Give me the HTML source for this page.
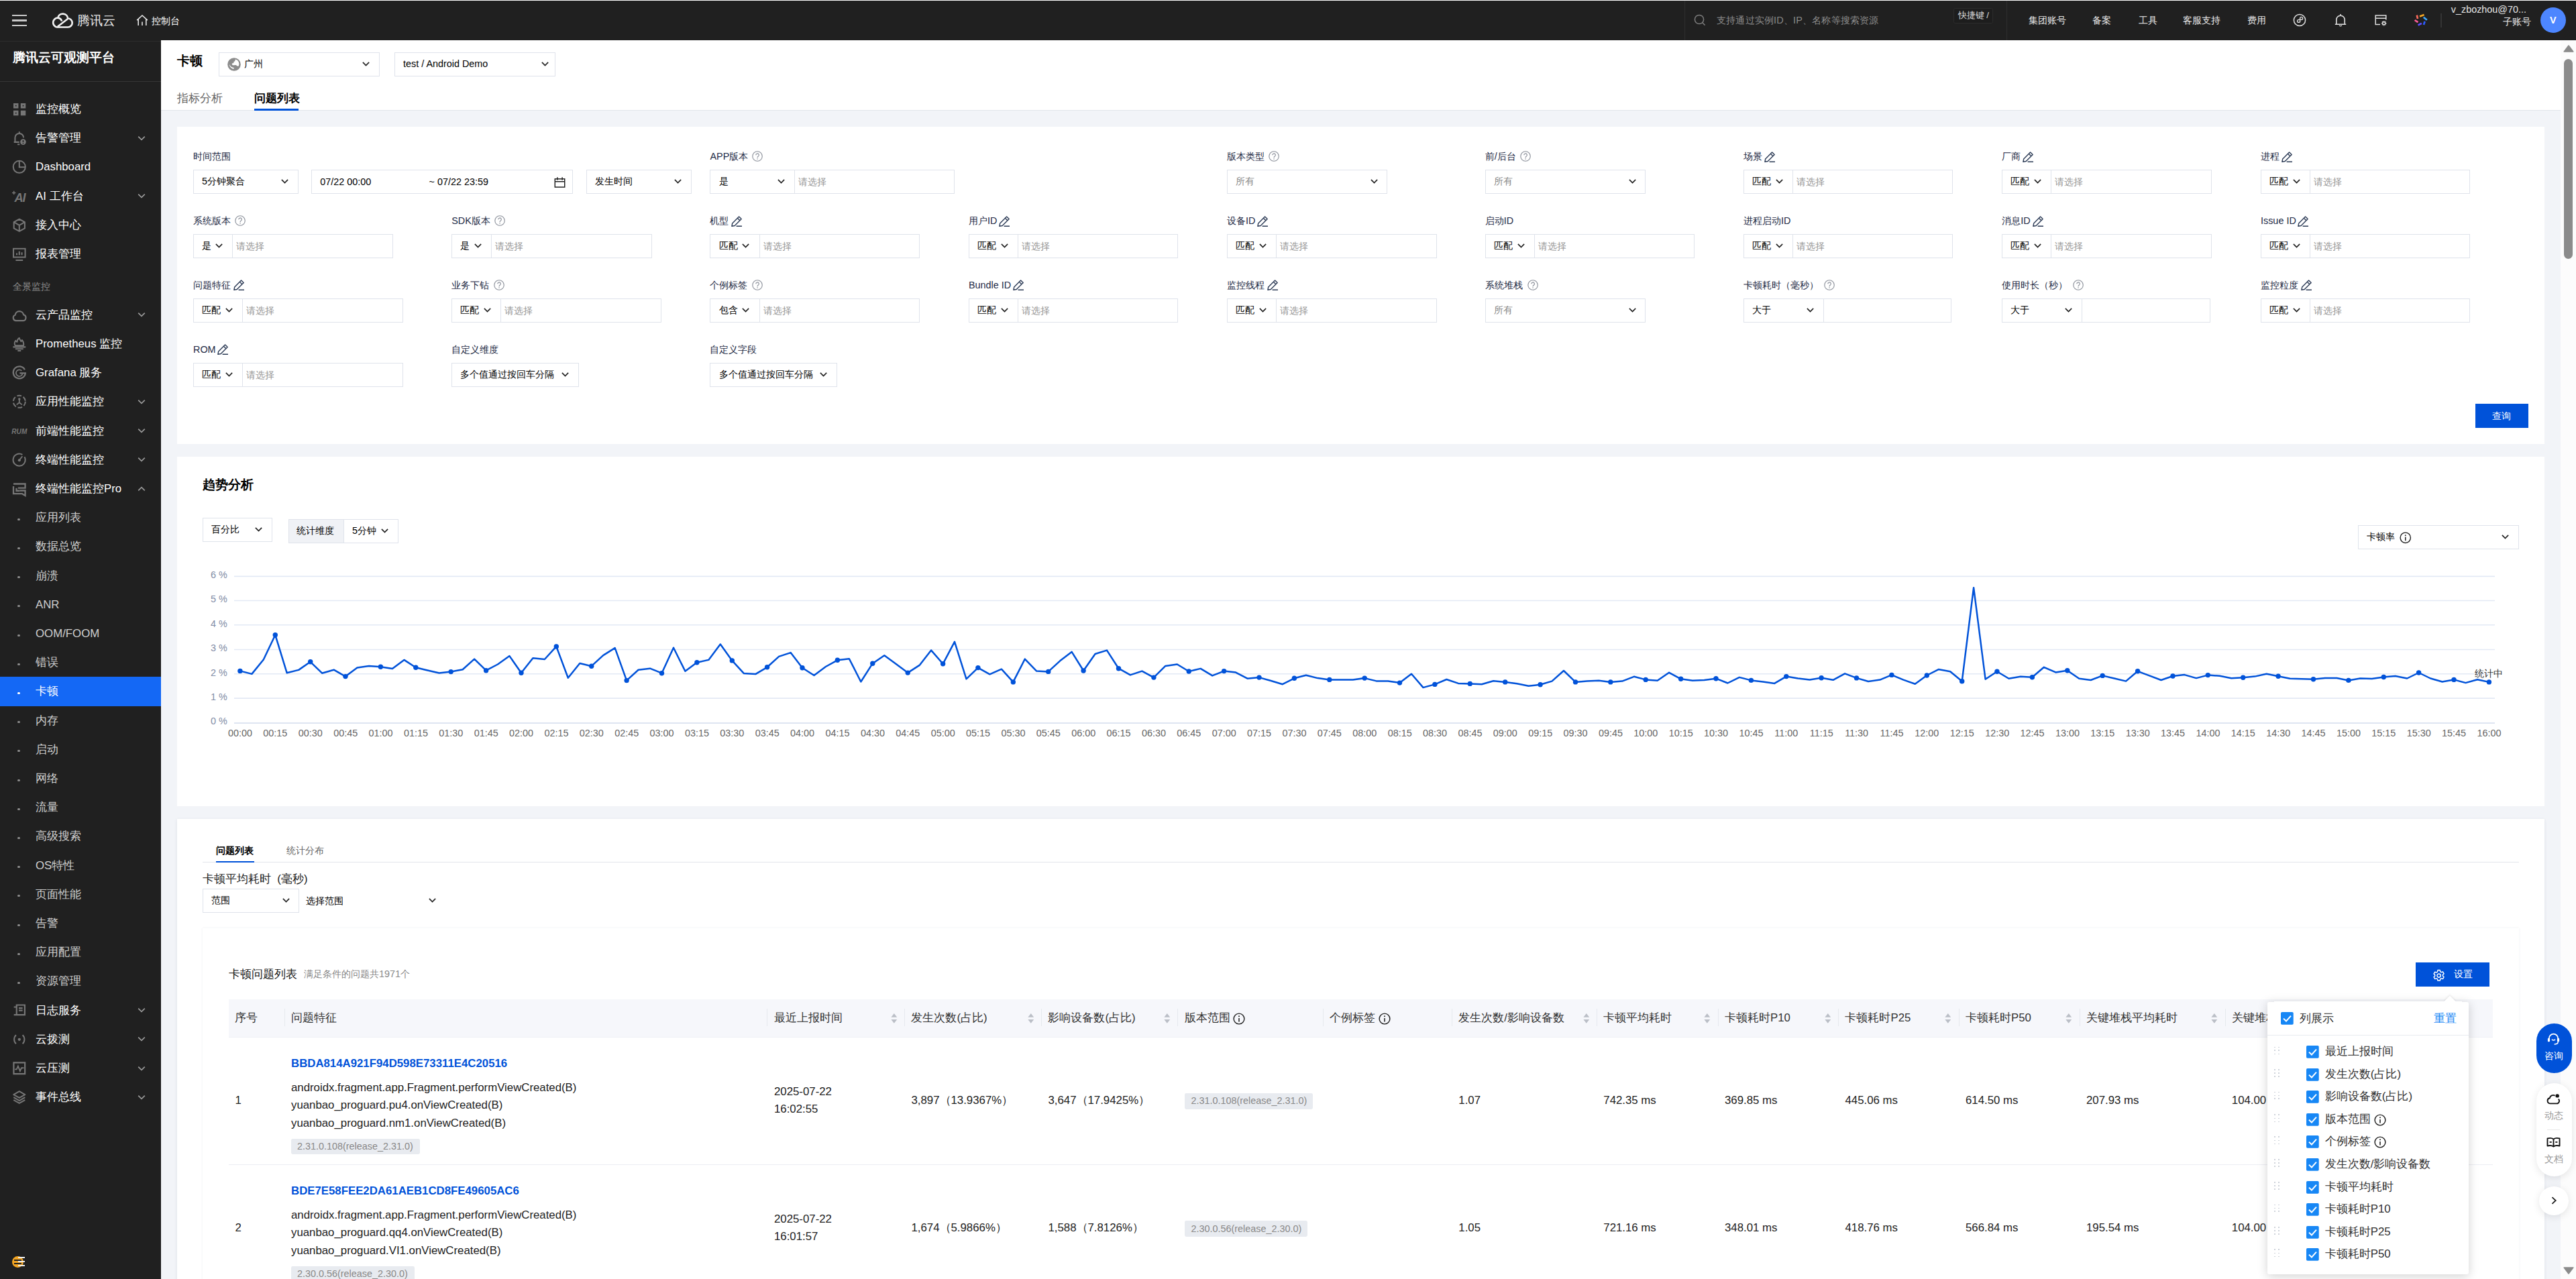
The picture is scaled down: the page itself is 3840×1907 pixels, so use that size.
<!DOCTYPE html><html><head><meta charset="utf-8"><title>卡顿</title><style>html,body{margin:0;padding:0;width:3840px;height:1907px;overflow:hidden;background:#f2f4f8}
#root{zoom:1.2;position:absolute;left:0;top:0;width:3200px;height:1589.2px;overflow:hidden;font-family:"Liberation Sans",sans-serif;font-size:12px;line-height:18px;color:#000;background:#f2f4f8}
#topline{position:absolute;left:0;top:0;width:3200px;height:0.84px;background:#fff;z-index:5}
#root *{box-sizing:border-box}
.abs{position:absolute}
svg{display:block;overflow:visible}
/* topbar */
#top{position:absolute;left:0;top:0;width:3200px;height:50.42px;background:#202020;color:#e4e4e4}
#top .t{position:absolute;white-space:nowrap;line-height:18px;height:18px;font-size:12px}
/* sidebar */
#side{position:absolute;left:0;top:51.07px;width:199.8px;height:1540px;background:#202020}
#side .title{position:absolute;left:16px;top:9.6px;font-size:16px;font-weight:bold;color:#fff;line-height:22px;white-space:nowrap}
#side .line{position:absolute;left:0;top:49.6px;width:200px;height:1px;background:#363636}
.mi{position:absolute;left:0;width:199.8px;height:36px;color:#fff;font-size:14px;line-height:36px;white-space:nowrap}
.mi .tx{position:absolute;left:44.2px;top:0}
.mi .ic{position:absolute;left:15.2px;top:9px;width:18px;height:18px}
.mi .ar{position:absolute;left:171px;top:13px;width:10px;height:10px}
.mi.sub{color:#cfcfcf}
.mi.sub .dot{position:absolute;left:22px;top:18.8px;width:2.6px;height:2.6px;border-radius:50%;background:#8c8c8c}
.mi.act{background:#1468f5;color:#fff}
.mi.act .dot{background:#fff}
.grp{position:absolute;left:16px;font-size:12px;color:#8a8a8a;line-height:18px}
/* header */
#hd{position:absolute;left:199.8px;top:50.4px;width:2980.2px;height:86px;background:#fff;border-bottom:1px solid #e3e6ec}
.sel{position:absolute;height:29.6px;border:1px solid #dcdee3;background:#fff;font-size:12px;line-height:27.6px;white-space:nowrap;color:#000}
.sel .v{position:absolute;left:10px;top:0}
.sel .ph{color:#888}
.sel .cv{position:absolute;right:10px;top:10.6px;width:9px;height:6px}
.lab{position:absolute;font-size:12px;line-height:18px;color:#1d2a45;white-space:nowrap;height:18px}
.card{position:absolute;background:#fff}
.ph{color:#999}
</style></head><body><div id="root"><div id="topline"></div>
<div id="top">
<div class="abs" style="left:15.0px;top:18.25px;width:18.333px;height:1.833px;background:#c9c9c9"></div>
<div class="abs" style="left:15.0px;top:24.5px;width:18.333px;height:1.833px;background:#c9c9c9"></div>
<div class="abs" style="left:15.0px;top:30.75px;width:18.333px;height:1.833px;background:#c9c9c9"></div>
<svg class="abs" style="left:63.333px;top:15.0px" width="28.333" height="21.667" viewBox="0 0 34 26"><path d="M9.0 22.5 H25.3 A6.5 6.5 0 0 0 25.2 9.5 A7.6 7.6 0 0 0 10.2 8.6 A7 7 0 0 0 9 22.5 z" fill="none" stroke="#efefef" stroke-width="2.7" stroke-linejoin="round"/><path d="M10.2 8.6 A7 7 0 0 1 16.2 13.6 M9.8 21.8 L24.8 10.2" stroke="#efefef" stroke-width="2.6" fill="none"/></svg>
<div class="t" style="left:95.417px;top:14.832999999999998px;font-size:15.6px;line-height:22px;height:22px;color:#e8e8e8">腾讯云</div>
<svg class="abs" style="left:168.75px;top:17.917px" width="15.0" height="14.167" viewBox="0 0 18 17"><path d="M1.2 8.2 L9 1 L16.8 8.2 M3.2 6.6 V16 M14.8 6.6 V16 M9 10.5 V16" fill="none" stroke="#e6e6e6" stroke-width="1.6"/></svg>
<div class="t" style="left:187.917px;top:17.333px;color:#fff">控制台</div>
<div class="abs" style="left:2092.5px;top:0;width:1px;height:50.4px;background:#2e2e2e"></div>
<svg class="abs" style="left:2104.583px;top:17.5px" width="15.0" height="15.0" viewBox="0 0 18 18"><circle cx="8" cy="8" r="6.6" fill="none" stroke="#7c7c7c" stroke-width="1.5"/><path d="M12.8 12.8 L16.6 16.6" stroke="#7c7c7c" stroke-width="1.5"/></svg>
<div class="t" style="left:2132.5px;top:17.083px;color:#8a8a8a;letter-spacing:0.15px">支持通过实例ID、IP、名称等搜索资源</div>
<div class="abs" style="left:2427.083px;top:10.0px;width:48.75px;height:19.583px;border:1px solid #2c2c2c;border-radius:2px;background:#1d1d1d;color:#dcdcdc;font-size:11px;line-height:15.967000000000002px;text-align:center;white-space:nowrap">快捷键 /</div>
<div class="abs" style="left:2492.5px;top:0;width:1px;height:50.4px;background:#2e2e2e"></div>
<div class="t" style="left:2519.833px;top:17.083px;color:#e6e6e6">集团账号</div>
<div class="t" style="left:2599.5px;top:17.083px;color:#e6e6e6">备案</div>
<div class="t" style="left:2656.25px;top:17.083px;color:#e6e6e6">工具</div>
<div class="t" style="left:2711.667px;top:17.083px;color:#e6e6e6">客服支持</div>
<div class="t" style="left:2791.667px;top:17.083px;color:#e6e6e6">费用</div>
<svg class="abs" style="left:2848.583px;top:16.583px" width="16.667" height="16.667" viewBox="0 0 20 20"><circle cx="10" cy="10" r="8.6" fill="none" stroke="#e0e0e0" stroke-width="1.5"/><path d="M10.6 13.2 V7.4 a2 2 0 1 1 2 2 H8.6 a2 2 0 1 0 2 2" fill="none" stroke="#e0e0e0" stroke-width="1.4"/></svg>
<svg class="abs" style="left:2898.75px;top:16.583px" width="16.667" height="16.667" viewBox="0 0 20 20"><path d="M1.800 16.200h16.400M3.800 16.200V9.400a6.200 6.200 0 0 1 12.400 0V16.200M10 1v2.200" fill="none" stroke="#e0e0e0" stroke-width="1.600"/><path d="M8.200 17.600a1.900 1.900 0 0 0 3.600 0" fill="none" stroke="#e0e0e0" stroke-width="1.400"/></svg>
<svg class="abs" style="left:2948.833px;top:16.583px" width="16.667" height="16.667" viewBox="0 0 20 20"><path d="M9 16.5 H2.2 V3 H17.8 V9.5 M2.2 7.2 H17.8" fill="none" stroke="#e0e0e0" stroke-width="1.5"/><circle cx="14.7" cy="14.7" r="2" fill="none" stroke="#e0e0e0" stroke-width="1.4"/><path d="M14.7 10.9 v1.6 M14.7 16.9 v1.6 M10.9 14.7 h1.6 M16.9 14.7 h1.6 M12 12 l1.1 1.1 M16.3 16.3 l1.1 1.1 M12 17.4 l1.1 -1.1 M16.3 13.1 l1.1 -1.1" stroke="#e0e0e0" stroke-width="1.2"/></svg>
<svg class="abs" style="left:2999.0px;top:16.583px" width="16.667" height="16.667" viewBox="0 0 20 20"><g fill="none" stroke-width="2.700"><path d="M8 4.500L14.600 1.900" stroke="#f5a623"/><path d="M13.800 5.800L18.800 9.800" stroke="#3fa9ff"/><path d="M15.600 11.800L14 17" stroke="#2b5cff"/><path d="M5.600 17.600L10.800 14.800" stroke="#5b4dff"/><path d="M0.600 10L5.400 13.200" stroke="#ff5e9a"/><path d="M3.800 2.600L5 8" stroke="#ff6b5e"/></g></svg>
<div class="abs" style="left:3032.083px;top:16.667px;width:1px;height:17.5px;background:#343434"></div>
<div class="t" style="left:3000.0px;width:138.333px;top:3.167px;text-align:right;color:#e6e6e6;font-size:12px">v_zbozhou@70...</div>
<div class="t" style="left:3000.0px;width:143.75px;top:18.667px;text-align:right;color:#e6e6e6;font-size:12px">子账号</div>
<div class="abs" style="left:3155.667px;top:9.333px;width:31.667px;height:31.667px;border-radius:50%;background:#4d86ff;color:#fff;font-weight:bold;font-size:12px;line-height:31.667px;text-align:center">V</div>
</div>
<div id="side"><div class="abs" style="left:0;top:-0.6px;width:199.8px;height:1.2px;background:#2d2d2d"></div><div class="title">腾讯云可观测平台</div><div class="line"></div>
<div class="mi" style="top:66.2px"><svg class="ic" viewBox="0 0 16 16"><path d="M1.5 1.5h5.5v5.5h-5.5zM9.5 1.5h5.5v5.5h-5.5zM1.5 9.5h5.5v5.5h-5.5zM9.5 9.5h5.5v5.5h-5.5z" fill="#767676"/><path d="M3.6 3.6h1.3v1.3h-1.3zM11.6 3.6h1.3v1.3h-1.3zM3.6 11.6h1.3v1.3h-1.3z" fill="#202020"/></svg><span class="tx">监控概览</span></div>
<div class="mi" style="top:102.32px"><svg class="ic" viewBox="0 0 16 16"><path d="M2 12.5h6M3.3 12.5V7.6a4.7 4.7 0 0 1 9.4 0M8 1v1.6M6 15h2.4" fill="none" stroke="#767676" stroke-width="1.5"/><circle cx="12.2" cy="12.3" r="3.2" fill="#767676"/><path d="M12.2 10.4v2.2M12.2 13.4v.9" stroke="#202020" stroke-width="1.1"/></svg><span class="tx">告警管理</span><svg class="ar" viewBox="0 0 10 10"><path d="M1 3L5 7L9 3" fill="none" stroke="#9a9a9a" stroke-width="1.4"/></svg></div>
<div class="mi" style="top:138.44px"><svg class="ic" viewBox="0 0 16 16"><circle cx="8" cy="8" r="6.7" fill="none" stroke="#767676" stroke-width="1.5"/><path d="M8 1.5V8.4H14.5" fill="none" stroke="#767676" stroke-width="1.5"/></svg><span class="tx">Dashboard</span></div>
<div class="mi" style="top:174.56px"><svg class="ic" viewBox="0 0 16 16"><text x="2.600" y="14" font-family="Liberation Sans" font-style="italic" font-weight="bold" font-size="13.500" fill="#767676" letter-spacing="-0.800">AI</text><path d="M2 2v4M0 4h4" stroke="#767676" stroke-width="1.100"/></svg><span class="tx">AI 工作台</span><svg class="ar" viewBox="0 0 10 10"><path d="M1 3L5 7L9 3" fill="none" stroke="#9a9a9a" stroke-width="1.4"/></svg></div>
<div class="mi" style="top:210.68px"><svg class="ic" viewBox="0 0 16 16"><path d="M8 1.3l6 3.3v6.8l-6 3.3l-6-3.3V4.6zM2.3 4.8L8 8l5.7-3.2M8 8v6.5" fill="none" stroke="#767676" stroke-width="1.5" stroke-linejoin="round"/></svg><span class="tx">接入中心</span></div>
<div class="mi" style="top:246.8px"><svg class="ic" viewBox="0 0 16 16"><path d="M1.5 2h13v9.5h-13zM4 14.8h8M5.2 9V7M8 9V5M10.8 9V6.2" fill="none" stroke="#767676" stroke-width="1.5"/></svg><span class="tx">报表管理</span></div>
<div class="grp" style="top:296.20000000000005px">全景监控</div>
<div class="mi" style="top:322.1px"><svg class="ic" viewBox="0 0 16 16"><path d="M4.4 14.2H11.8a3.3 3.3 0 0 0 .9-6.5a4.7 4.7 0 0 0-9.3 .3a3.2 3.2 0 0 0 1 6.2z" fill="none" stroke="#767676" stroke-width="1.6" stroke-linejoin="round"/></svg><span class="tx">云产品监控</span><svg class="ar" viewBox="0 0 10 10"><path d="M1 3L5 7L9 3" fill="none" stroke="#9a9a9a" stroke-width="1.4"/></svg></div>
<div class="mi" style="top:358.1px"><svg class="ic" viewBox="0 0 16 16"><path d="M3.400 9.800c-1.300-2.200-.600-4 .500-5.600c.5 1.200 1.100 1.600 1.800 1.500c-.2-1.900 .8-3.300 2.300-4.300c.2 1.700 1.300 2.500 1.900 3.900c.6-.3 .9-.9 1-1.700c1.600 1.700 2.300 3.800 1.700 6.200z" fill="none" stroke="#767676" stroke-width="1.400" stroke-linejoin="round"/><path d="M1 11.400h14M3.600 13.600h8.800M6.200 15.600h3.600" stroke="#767676" stroke-width="1.500"/></svg><span class="tx">Prometheus 监控</span></div>
<div class="mi" style="top:394.1px"><svg class="ic" viewBox="0 0 16 16"><path d="M14 4.6A6.7 6.7 0 1 0 14.7 8.4H8.4" fill="none" stroke="#767676" stroke-width="1.7"/><path d="M11.6 8.4a3.6 3.6 0 1 1-1-2.6" fill="none" stroke="#767676" stroke-width="1.3"/></svg><span class="tx">Grafana 服务</span></div>
<div class="mi" style="top:430.1px"><svg class="ic" viewBox="0 0 16 16"><circle cx="8" cy="8" r="6.7" fill="none" stroke="#767676" stroke-width="1.5" stroke-dasharray="5 2.2"/><circle cx="8" cy="5.2" r="1.3" fill="#767676"/><path d="M8 6v3M8 9l-3 2.4M8 9l3 2.4" stroke="#767676" stroke-width="1.4" fill="none"/></svg><span class="tx">应用性能监控</span><svg class="ar" viewBox="0 0 10 10"><path d="M1 3L5 7L9 3" fill="none" stroke="#9a9a9a" stroke-width="1.4"/></svg></div>
<div class="mi" style="top:466.1px"><svg class="ic" viewBox="0 0 16 16"><text x="-0.5" y="11.800" font-family="Liberation Sans" font-style="italic" font-weight="bold" font-size="8.6" fill="#767676" textLength="17" lengthAdjust="spacingAndGlyphs">RUM</text></svg><span class="tx">前端性能监控</span><svg class="ar" viewBox="0 0 10 10"><path d="M1 3L5 7L9 3" fill="none" stroke="#9a9a9a" stroke-width="1.4"/></svg></div>
<div class="mi" style="top:502.1px"><svg class="ic" viewBox="0 0 16 16"><path d="M13.7 4.6A6.7 6.7 0 1 1 11.4 2.2" fill="none" stroke="#767676" stroke-width="1.5"/><circle cx="8" cy="8.3" r="1.5" fill="#767676"/><path d="M8 8.3l3.4-4.4" stroke="#767676" stroke-width="1.4"/></svg><span class="tx">终端性能监控</span><svg class="ar" viewBox="0 0 10 10"><path d="M1 3L5 7L9 3" fill="none" stroke="#9a9a9a" stroke-width="1.4"/></svg></div>
<div class="mi" style="top:538.1px"><svg class="ic" viewBox="0 0 16 16"><path d="M1.500 2.600h13v4.600h-8M1.500 5.200v8.300h9.600l3.400 2v-5.500h-6" fill="none" stroke="#767676" stroke-width="1.700"/><path d="M4.800 7.200v3h3.700" fill="none" stroke="#767676" stroke-width="1.700"/></svg><span class="tx">终端性能监控Pro</span><svg class="ar" viewBox="0 0 10 10"><path d="M1 7L5 3L9 7" fill="none" stroke="#9a9a9a" stroke-width="1.4"/></svg></div>
<div class="mi sub" style="top:574.1px"><span class="dot"></span><span class="tx">应用列表</span></div>
<div class="mi sub" style="top:610.1px"><span class="dot"></span><span class="tx">数据总览</span></div>
<div class="mi sub" style="top:646.1px"><span class="dot"></span><span class="tx">崩溃</span></div>
<div class="mi sub" style="top:682.1px"><span class="dot"></span><span class="tx">ANR</span></div>
<div class="mi sub" style="top:718.1px"><span class="dot"></span><span class="tx">OOM/FOOM</span></div>
<div class="mi sub" style="top:754.1px"><span class="dot"></span><span class="tx">错误</span></div>
<div class="mi sub act" style="top:790.1px"><span class="dot"></span><span class="tx">卡顿</span></div>
<div class="mi sub" style="top:826.1px"><span class="dot"></span><span class="tx">内存</span></div>
<div class="mi sub" style="top:862.1px"><span class="dot"></span><span class="tx">启动</span></div>
<div class="mi sub" style="top:898.1px"><span class="dot"></span><span class="tx">网络</span></div>
<div class="mi sub" style="top:934.1px"><span class="dot"></span><span class="tx">流量</span></div>
<div class="mi sub" style="top:970.1px"><span class="dot"></span><span class="tx">高级搜索</span></div>
<div class="mi sub" style="top:1006.1px"><span class="dot"></span><span class="tx">OS特性</span></div>
<div class="mi sub" style="top:1042.1px"><span class="dot"></span><span class="tx">页面性能</span></div>
<div class="mi sub" style="top:1078.1px"><span class="dot"></span><span class="tx">告警</span></div>
<div class="mi sub" style="top:1114.1px"><span class="dot"></span><span class="tx">应用配置</span></div>
<div class="mi sub" style="top:1150.1px"><span class="dot"></span><span class="tx">资源管理</span></div>
<div class="mi" style="top:1186.1px"><svg class="ic" viewBox="0 0 16 16"><path d="M5 2.600h9v10.800h-9zM2 4.800h3v8.600h-3M7.400 6h4.200M7.400 8.600h4.200" fill="none" stroke="#767676" stroke-width="1.600"/></svg><span class="tx">日志服务</span><svg class="ar" viewBox="0 0 10 10"><path d="M1 3L5 7L9 3" fill="none" stroke="#9a9a9a" stroke-width="1.4"/></svg></div>
<div class="mi" style="top:1222.1px"><svg class="ic" viewBox="0 0 16 16"><circle cx="8" cy="8" r="1.6" fill="#767676"/><path d="M4.4 3.2a6.6 6.6 0 0 0 0 9.6M11.6 3.2a6.6 6.6 0 0 1 0 9.6" fill="none" stroke="#767676" stroke-width="1.5"/></svg><span class="tx">云拨测</span><svg class="ar" viewBox="0 0 10 10"><path d="M1 3L5 7L9 3" fill="none" stroke="#9a9a9a" stroke-width="1.4"/></svg></div>
<div class="mi" style="top:1258.1px"><svg class="ic" viewBox="0 0 16 16"><path d="M1.8 1.8h12.4v12.4h-12.4z" fill="none" stroke="#767676" stroke-width="1.6"/><path d="M3 9.2h2l1.6-3.6l2.2 5.4l1.6-3.4h2.6" fill="none" stroke="#767676" stroke-width="1.4"/></svg><span class="tx">云压测</span><svg class="ar" viewBox="0 0 10 10"><path d="M1 3L5 7L9 3" fill="none" stroke="#9a9a9a" stroke-width="1.4"/></svg></div>
<div class="mi" style="top:1294.1px"><svg class="ic" viewBox="0 0 16 16"><path d="M8 1.6l6.3 3.6L8 8.8L1.7 5.2zM1.7 8.3L8 11.9l6.3-3.6M1.7 11.2L8 14.8l6.3-3.6" fill="none" stroke="#767676" stroke-width="1.5" stroke-linejoin="round"/></svg><span class="tx">事件总线</span><svg class="ar" viewBox="0 0 10 10"><path d="M1 3L5 7L9 3" fill="none" stroke="#9a9a9a" stroke-width="1.4"/></svg></div>
<div class="abs" style="left:15.0px;top:1509.6px;width:14.167px;height:14.167px;border-radius:50%;background:#f5a623"></div>
<div class="abs" style="left:22.5px;top:1510.85px;width:8.333px;height:1.3px;background:#eee;box-shadow:0 5.0px 0 #eee,0 10.0px 0 #eee"></div>
<div class="abs" style="left:17.5px;top:1514.183px;width:9.167px;height:1.6px;background:#202020;box-shadow:0 4.167px 0 #202020"></div>
</div>
<div class="abs" style="left:199.75px;top:50.333px;width:2981.083px;height:86.833px;background:#fff;border-bottom:1px solid #e2e5ea"></div>
<div class="abs" style="left:220.0px;top:63.83px;font-size:16px;line-height:24px;height:24px;color:#000;white-space:nowrap;font-weight:bold;">卡顿</div>
<div class="abs" style="left:271.667px;top:65.0px;width:200.0px;height:30.0px;border:1px solid #dfe3eb;background:#fff"></div>
<div class="abs" style="left:302.917px;top:70.75px;font-size:12px;line-height:18px;height:18px;color:#000;white-space:nowrap;">广州</div>
<svg class="abs" style="left:450.4px;top:76.82px" width="9.2" height="5.52" viewBox="0 0 10 6"><path d="M0.8 0.8L5 5L9.2 0.8" fill="none" stroke="#222" stroke-width="1.5"/></svg>
<svg class="abs" style="left:282.5px;top:71.333px" width="16.667" height="16.667" viewBox="0 0 20 20"><circle cx="10" cy="10" r="9.8" fill="#8c8c8c"/><path d="M11.8 2.6c2.6 .5 5 2.600 5.500 5.600c.3 1.900-.2 3.400-1 4.600c-1.500 .1-2.500-.8-3.300-1.700l-4.600 .2c-1.700-.4-2-1.900-1.300-2.800l2.200-.6l.300-2l1.800-.8z" fill="#fff"/><path d="M3 9.800c.6 1.300 1.400 2.600 2.600 3.600c1.300 1 2.800 1.200 4 1.400l-.2 2.200c-2.200-.6-4.200-1.700-5.400-3.600c-.6-1.100-1-2.300-1-3.600z" fill="#fff"/></svg>
<div class="abs" style="left:490.25px;top:65.0px;width:199.75px;height:30.0px;border:1px solid #dfe3eb;background:#fff"></div>
<div class="abs" style="left:500.833px;top:70.75px;font-size:12px;line-height:18px;height:18px;color:#000;white-space:nowrap;">test / Android Demo</div>
<svg class="abs" style="left:672.9px;top:76.82px" width="9.2" height="5.52" viewBox="0 0 10 6"><path d="M0.8 0.8L5 5L9.2 0.8" fill="none" stroke="#222" stroke-width="1.5"/></svg>
<div class="abs" style="left:220.0px;top:112.25px;font-size:14px;line-height:20px;height:20px;color:#666;white-space:nowrap;">指标分析</div>
<div class="abs" style="left:315.833px;top:112.25px;font-size:14px;line-height:20px;height:20px;color:#000;white-space:nowrap;font-weight:bold;">问题列表</div>
<div class="abs" style="left:315.833px;top:134.917px;width:55.417px;height:2.25px;background:#0052d9"></div>
<div class="abs" style="left:3180.833px;top:50.333px;width:19.167px;height:1538.833px;background:#fcfcfc"></div>
<svg class="abs" style="left:3183.75px;top:55.833px" width="13.333" height="9.167" viewBox="0 0 16 11"><path d="M1.2 10L8 1L14.8 10z" fill="#8b8b8b" stroke="#8b8b8b" stroke-width="1.6" stroke-linejoin="round"/></svg>
<svg class="abs" style="left:3183.75px;top:1574.583px" width="13.333" height="9.167" viewBox="0 0 16 11"><path d="M1.2 1L8 10L14.8 1z" fill="#8b8b8b" stroke="#8b8b8b" stroke-width="1.6" stroke-linejoin="round"/></svg>
<div class="abs" style="left:3185.0px;top:73.333px;width:10.833px;height:248.333px;background:#8b8b8b;border-radius:5.417px"></div>
<div class="abs" style="left:220.0px;top:157.25px;width:2940.833px;height:394.417px;background:#fff"></div>
<div class="abs" style="left:240.0px;top:185.83px;font-size:12px;line-height:18px;height:18px;color:#1d2a45;white-space:nowrap;">时间范围</div>
<div class="abs" style="left:240.0px;top:210.833px;width:130.417px;height:30.0px;border:1px solid #dfe3eb;background:#fff"></div>
<div class="abs" style="left:250.833px;top:216.58px;font-size:12px;line-height:18px;height:18px;color:#000;white-space:nowrap;">5分钟聚合</div>
<svg class="abs" style="left:349.15px;top:222.66px" width="9.2" height="5.52" viewBox="0 0 10 6"><path d="M0.8 0.8L5 5L9.2 0.8" fill="none" stroke="#222" stroke-width="1.5"/></svg>
<div class="abs" style="left:386.667px;top:210.833px;width:325.0px;height:30.0px;border:1px solid #dfe3eb;background:#fff"></div>
<div class="abs" style="left:397.75px;top:217.67px;font-size:12px;line-height:18px;height:18px;color:#000;white-space:nowrap;">07/22 00:00</div>
<div class="abs" style="left:532.917px;top:217.67px;font-size:12px;line-height:18px;height:18px;color:#000;white-space:nowrap;">~ 07/22 23:59</div>
<svg class="abs" style="left:688.583px;top:219.167px" width="14.167" height="14.583" viewBox="0 0 16 16"><path d="M1.2 3.4h13.6v11.4H1.2zM1.2 7h13.6M4.6 1v4M11.4 1v4" fill="none" stroke="#222" stroke-width="1.4"/></svg>
<div class="abs" style="left:728.333px;top:210.833px;width:131.25px;height:30.0px;border:1px solid #dfe3eb;background:#fff"></div>
<div class="abs" style="left:738.75px;top:216.58px;font-size:12px;line-height:18px;height:18px;color:#000;white-space:nowrap;">发生时间</div>
<svg class="abs" style="left:837.9px;top:222.66px" width="9.2" height="5.52" viewBox="0 0 10 6"><path d="M0.8 0.8L5 5L9.2 0.8" fill="none" stroke="#222" stroke-width="1.5"/></svg>
<div class="abs" style="left:882.083px;top:185.83px;font-size:12px;line-height:18px;height:18px;color:#1d2a45;white-space:nowrap;">APP版本</div>
<svg class="abs" style="left:934.167px;top:187.55px" width="13.4" height="13.4" viewBox="0 0 16 16"><circle cx="8" cy="8" r="7.2" fill="none" stroke="#8a8f99" stroke-width="1.1"/><path d="M5.7 6.3a2.3 2.3 0 1 1 3.4 2c-.8 .5-1.1 .9-1.1 1.8" fill="none" stroke="#8a8f99" stroke-width="1.2"/><circle cx="8" cy="12" r=".8" fill="#8a8f99"/></svg>
<div class="abs" style="left:882.083px;top:210.833px;width:304.167px;height:30.0px;border:1px solid #dfe3eb;background:#fff"></div>
<div class="abs" style="left:986.667px;top:210.833px;width:1.0px;height:30.0px;background:#dfe3eb"></div>
<div class="abs" style="left:892.917px;top:216.42px;font-size:12px;line-height:18px;height:18px;color:#000;white-space:nowrap;">是</div>
<svg class="abs" style="left:965.82px;top:222.66px" width="9.2" height="5.52" viewBox="0 0 10 6"><path d="M0.8 0.8L5 5L9.2 0.8" fill="none" stroke="#222" stroke-width="1.5"/></svg>
<div class="abs" style="left:991.667px;top:217.33px;font-size:12px;line-height:18px;height:18px;color:#999;white-space:nowrap;">请选择</div>
<div class="abs" style="left:1524.167px;top:185.83px;font-size:12px;line-height:18px;height:18px;color:#1d2a45;white-space:nowrap;">版本类型</div>
<svg class="abs" style="left:1575.833px;top:187.55px" width="13.4" height="13.4" viewBox="0 0 16 16"><circle cx="8" cy="8" r="7.2" fill="none" stroke="#8a8f99" stroke-width="1.1"/><path d="M5.7 6.3a2.3 2.3 0 1 1 3.4 2c-.8 .5-1.1 .9-1.1 1.8" fill="none" stroke="#8a8f99" stroke-width="1.2"/><circle cx="8" cy="12" r=".8" fill="#8a8f99"/></svg>
<div class="abs" style="left:1524.167px;top:210.833px;width:199.583px;height:30.0px;border:1px solid #dfe3eb;background:#fff"></div>
<div class="abs" style="left:1535.0px;top:216.58px;font-size:12px;line-height:18px;height:18px;color:#888;white-space:nowrap;">所有</div>
<svg class="abs" style="left:1702.48px;top:222.66px" width="9.2" height="5.52" viewBox="0 0 10 6"><path d="M0.8 0.8L5 5L9.2 0.8" fill="none" stroke="#222" stroke-width="1.5"/></svg>
<div class="abs" style="left:1844.75px;top:185.83px;font-size:12px;line-height:18px;height:18px;color:#1d2a45;white-space:nowrap;">前/后台</div>
<svg class="abs" style="left:1888.083px;top:187.55px" width="13.4" height="13.4" viewBox="0 0 16 16"><circle cx="8" cy="8" r="7.2" fill="none" stroke="#8a8f99" stroke-width="1.1"/><path d="M5.7 6.3a2.3 2.3 0 1 1 3.4 2c-.8 .5-1.1 .9-1.1 1.8" fill="none" stroke="#8a8f99" stroke-width="1.2"/><circle cx="8" cy="12" r=".8" fill="#8a8f99"/></svg>
<div class="abs" style="left:1844.75px;top:210.833px;width:199.583px;height:30.0px;border:1px solid #dfe3eb;background:#fff"></div>
<div class="abs" style="left:1855.583px;top:216.58px;font-size:12px;line-height:18px;height:18px;color:#888;white-space:nowrap;">所有</div>
<svg class="abs" style="left:2023.07px;top:222.66px" width="9.2" height="5.52" viewBox="0 0 10 6"><path d="M0.8 0.8L5 5L9.2 0.8" fill="none" stroke="#222" stroke-width="1.5"/></svg>
<div class="abs" style="left:2165.833px;top:185.83px;font-size:12px;line-height:18px;height:18px;color:#1d2a45;white-space:nowrap;">场景</div>
<svg class="abs" style="left:2191.25px;top:188.0px" width="13.333" height="13.333" viewBox="0 0 16 16"><path d="M11.6 0.900L15.200 4.500L5.200 14.500L0.900 15.300L1.700 11Z" fill="none" stroke="#2b3a55" stroke-width="1.400" stroke-linejoin="round"/><path d="M9.300 3.200L12.900 6.800M7.600 15.300H16" stroke="#2b3a55" stroke-width="1.400"/></svg>
<div class="abs" style="left:2165.833px;top:210.833px;width:260.417px;height:30.0px;border:1px solid #dfe3eb;background:#fff"></div>
<div class="abs" style="left:2226.667px;top:210.833px;width:1.0px;height:30.0px;background:#dfe3eb"></div>
<div class="abs" style="left:2176.667px;top:216.42px;font-size:12px;line-height:18px;height:18px;color:#000;white-space:nowrap;">匹配</div>
<svg class="abs" style="left:2205.82px;top:222.66px" width="9.2" height="5.52" viewBox="0 0 10 6"><path d="M0.8 0.8L5 5L9.2 0.8" fill="none" stroke="#222" stroke-width="1.5"/></svg>
<div class="abs" style="left:2231.667px;top:217.33px;font-size:12px;line-height:18px;height:18px;color:#999;white-space:nowrap;">请选择</div>
<div class="abs" style="left:2486.917px;top:185.83px;font-size:12px;line-height:18px;height:18px;color:#1d2a45;white-space:nowrap;">厂商</div>
<svg class="abs" style="left:2512.333px;top:188.0px" width="13.333" height="13.333" viewBox="0 0 16 16"><path d="M11.6 0.900L15.200 4.500L5.200 14.500L0.900 15.300L1.700 11Z" fill="none" stroke="#2b3a55" stroke-width="1.400" stroke-linejoin="round"/><path d="M9.300 3.200L12.900 6.800M7.600 15.300H16" stroke="#2b3a55" stroke-width="1.400"/></svg>
<div class="abs" style="left:2486.917px;top:210.833px;width:260.417px;height:30.0px;border:1px solid #dfe3eb;background:#fff"></div>
<div class="abs" style="left:2547.75px;top:210.833px;width:1.0px;height:30.0px;background:#dfe3eb"></div>
<div class="abs" style="left:2497.75px;top:216.42px;font-size:12px;line-height:18px;height:18px;color:#000;white-space:nowrap;">匹配</div>
<svg class="abs" style="left:2526.9px;top:222.66px" width="9.2" height="5.52" viewBox="0 0 10 6"><path d="M0.8 0.8L5 5L9.2 0.8" fill="none" stroke="#222" stroke-width="1.5"/></svg>
<div class="abs" style="left:2552.75px;top:217.33px;font-size:12px;line-height:18px;height:18px;color:#999;white-space:nowrap;">请选择</div>
<div class="abs" style="left:2808.333px;top:185.83px;font-size:12px;line-height:18px;height:18px;color:#1d2a45;white-space:nowrap;">进程</div>
<svg class="abs" style="left:2833.75px;top:188.0px" width="13.333" height="13.333" viewBox="0 0 16 16"><path d="M11.6 0.900L15.200 4.500L5.200 14.500L0.900 15.300L1.700 11Z" fill="none" stroke="#2b3a55" stroke-width="1.400" stroke-linejoin="round"/><path d="M9.300 3.200L12.900 6.800M7.600 15.300H16" stroke="#2b3a55" stroke-width="1.400"/></svg>
<div class="abs" style="left:2808.333px;top:210.833px;width:260.417px;height:30.0px;border:1px solid #dfe3eb;background:#fff"></div>
<div class="abs" style="left:2869.167px;top:210.833px;width:1.0px;height:30.0px;background:#dfe3eb"></div>
<div class="abs" style="left:2819.167px;top:216.42px;font-size:12px;line-height:18px;height:18px;color:#000;white-space:nowrap;">匹配</div>
<svg class="abs" style="left:2848.32px;top:222.66px" width="9.2" height="5.52" viewBox="0 0 10 6"><path d="M0.8 0.8L5 5L9.2 0.8" fill="none" stroke="#222" stroke-width="1.5"/></svg>
<div class="abs" style="left:2874.167px;top:217.33px;font-size:12px;line-height:18px;height:18px;color:#999;white-space:nowrap;">请选择</div>
<div class="abs" style="left:240.0px;top:265.75px;font-size:12px;line-height:18px;height:18px;color:#1d2a45;white-space:nowrap;">系统版本</div>
<svg class="abs" style="left:292.083px;top:267.47px" width="13.4" height="13.4" viewBox="0 0 16 16"><circle cx="8" cy="8" r="7.2" fill="none" stroke="#8a8f99" stroke-width="1.1"/><path d="M5.7 6.3a2.3 2.3 0 1 1 3.4 2c-.8 .5-1.1 .9-1.1 1.8" fill="none" stroke="#8a8f99" stroke-width="1.2"/><circle cx="8" cy="12" r=".8" fill="#8a8f99"/></svg>
<div class="abs" style="left:240.0px;top:290.833px;width:248.333px;height:30.0px;border:1px solid #dfe3eb;background:#fff"></div>
<div class="abs" style="left:288.333px;top:290.833px;width:1.0px;height:30.0px;background:#dfe3eb"></div>
<div class="abs" style="left:250.833px;top:296.42px;font-size:12px;line-height:18px;height:18px;color:#000;white-space:nowrap;">是</div>
<svg class="abs" style="left:267.48px;top:302.66px" width="9.2" height="5.52" viewBox="0 0 10 6"><path d="M0.8 0.8L5 5L9.2 0.8" fill="none" stroke="#222" stroke-width="1.5"/></svg>
<div class="abs" style="left:293.333px;top:297.33px;font-size:12px;line-height:18px;height:18px;color:#999;white-space:nowrap;">请选择</div>
<div class="abs" style="left:561.0px;top:265.75px;font-size:12px;line-height:18px;height:18px;color:#1d2a45;white-space:nowrap;">SDK版本</div>
<svg class="abs" style="left:614.333px;top:267.47px" width="13.4" height="13.4" viewBox="0 0 16 16"><circle cx="8" cy="8" r="7.2" fill="none" stroke="#8a8f99" stroke-width="1.1"/><path d="M5.7 6.3a2.3 2.3 0 1 1 3.4 2c-.8 .5-1.1 .9-1.1 1.8" fill="none" stroke="#8a8f99" stroke-width="1.2"/><circle cx="8" cy="12" r=".8" fill="#8a8f99"/></svg>
<div class="abs" style="left:561.0px;top:290.833px;width:249.167px;height:30.0px;border:1px solid #dfe3eb;background:#fff"></div>
<div class="abs" style="left:610.167px;top:290.833px;width:1.0px;height:30.0px;background:#dfe3eb"></div>
<div class="abs" style="left:571.833px;top:296.42px;font-size:12px;line-height:18px;height:18px;color:#000;white-space:nowrap;">是</div>
<svg class="abs" style="left:589.32px;top:302.66px" width="9.2" height="5.52" viewBox="0 0 10 6"><path d="M0.8 0.8L5 5L9.2 0.8" fill="none" stroke="#222" stroke-width="1.5"/></svg>
<div class="abs" style="left:615.167px;top:297.33px;font-size:12px;line-height:18px;height:18px;color:#999;white-space:nowrap;">请选择</div>
<div class="abs" style="left:882.083px;top:265.75px;font-size:12px;line-height:18px;height:18px;color:#1d2a45;white-space:nowrap;">机型</div>
<svg class="abs" style="left:907.917px;top:267.92px" width="13.333" height="13.333" viewBox="0 0 16 16"><path d="M11.6 0.900L15.200 4.500L5.200 14.500L0.900 15.300L1.700 11Z" fill="none" stroke="#2b3a55" stroke-width="1.400" stroke-linejoin="round"/><path d="M9.300 3.200L12.900 6.800M7.600 15.300H16" stroke="#2b3a55" stroke-width="1.400"/></svg>
<div class="abs" style="left:882.083px;top:290.833px;width:260.417px;height:30.0px;border:1px solid #dfe3eb;background:#fff"></div>
<div class="abs" style="left:942.917px;top:290.833px;width:1.0px;height:30.0px;background:#dfe3eb"></div>
<div class="abs" style="left:892.917px;top:296.42px;font-size:12px;line-height:18px;height:18px;color:#000;white-space:nowrap;">匹配</div>
<svg class="abs" style="left:922.07px;top:302.66px" width="9.2" height="5.52" viewBox="0 0 10 6"><path d="M0.8 0.8L5 5L9.2 0.8" fill="none" stroke="#222" stroke-width="1.5"/></svg>
<div class="abs" style="left:947.917px;top:297.33px;font-size:12px;line-height:18px;height:18px;color:#999;white-space:nowrap;">请选择</div>
<div class="abs" style="left:1203.333px;top:265.75px;font-size:12px;line-height:18px;height:18px;color:#1d2a45;white-space:nowrap;">用户ID</div>
<svg class="abs" style="left:1240.833px;top:267.92px" width="13.333" height="13.333" viewBox="0 0 16 16"><path d="M11.6 0.900L15.200 4.500L5.200 14.500L0.900 15.300L1.700 11Z" fill="none" stroke="#2b3a55" stroke-width="1.400" stroke-linejoin="round"/><path d="M9.300 3.200L12.900 6.800M7.600 15.300H16" stroke="#2b3a55" stroke-width="1.400"/></svg>
<div class="abs" style="left:1203.333px;top:290.833px;width:260.417px;height:30.0px;border:1px solid #dfe3eb;background:#fff"></div>
<div class="abs" style="left:1264.167px;top:290.833px;width:1.0px;height:30.0px;background:#dfe3eb"></div>
<div class="abs" style="left:1214.167px;top:296.42px;font-size:12px;line-height:18px;height:18px;color:#000;white-space:nowrap;">匹配</div>
<svg class="abs" style="left:1243.32px;top:302.66px" width="9.2" height="5.52" viewBox="0 0 10 6"><path d="M0.8 0.8L5 5L9.2 0.8" fill="none" stroke="#222" stroke-width="1.5"/></svg>
<div class="abs" style="left:1269.167px;top:297.33px;font-size:12px;line-height:18px;height:18px;color:#999;white-space:nowrap;">请选择</div>
<div class="abs" style="left:1524.167px;top:265.75px;font-size:12px;line-height:18px;height:18px;color:#1d2a45;white-space:nowrap;">设备ID</div>
<svg class="abs" style="left:1561.667px;top:267.92px" width="13.333" height="13.333" viewBox="0 0 16 16"><path d="M11.6 0.900L15.200 4.500L5.200 14.500L0.900 15.300L1.700 11Z" fill="none" stroke="#2b3a55" stroke-width="1.400" stroke-linejoin="round"/><path d="M9.300 3.200L12.900 6.800M7.600 15.300H16" stroke="#2b3a55" stroke-width="1.400"/></svg>
<div class="abs" style="left:1524.167px;top:290.833px;width:260.417px;height:30.0px;border:1px solid #dfe3eb;background:#fff"></div>
<div class="abs" style="left:1585.0px;top:290.833px;width:1.0px;height:30.0px;background:#dfe3eb"></div>
<div class="abs" style="left:1535.0px;top:296.42px;font-size:12px;line-height:18px;height:18px;color:#000;white-space:nowrap;">匹配</div>
<svg class="abs" style="left:1564.15px;top:302.66px" width="9.2" height="5.52" viewBox="0 0 10 6"><path d="M0.8 0.8L5 5L9.2 0.8" fill="none" stroke="#222" stroke-width="1.5"/></svg>
<div class="abs" style="left:1590.0px;top:297.33px;font-size:12px;line-height:18px;height:18px;color:#999;white-space:nowrap;">请选择</div>
<div class="abs" style="left:1844.75px;top:265.75px;font-size:12px;line-height:18px;height:18px;color:#1d2a45;white-space:nowrap;">启动ID</div>
<div class="abs" style="left:1844.75px;top:290.833px;width:260.417px;height:30.0px;border:1px solid #dfe3eb;background:#fff"></div>
<div class="abs" style="left:1905.583px;top:290.833px;width:1.0px;height:30.0px;background:#dfe3eb"></div>
<div class="abs" style="left:1855.583px;top:296.42px;font-size:12px;line-height:18px;height:18px;color:#000;white-space:nowrap;">匹配</div>
<svg class="abs" style="left:1884.73px;top:302.66px" width="9.2" height="5.52" viewBox="0 0 10 6"><path d="M0.8 0.8L5 5L9.2 0.8" fill="none" stroke="#222" stroke-width="1.5"/></svg>
<div class="abs" style="left:1910.583px;top:297.33px;font-size:12px;line-height:18px;height:18px;color:#999;white-space:nowrap;">请选择</div>
<div class="abs" style="left:2165.833px;top:265.75px;font-size:12px;line-height:18px;height:18px;color:#1d2a45;white-space:nowrap;">进程启动ID</div>
<div class="abs" style="left:2165.833px;top:290.833px;width:260.417px;height:30.0px;border:1px solid #dfe3eb;background:#fff"></div>
<div class="abs" style="left:2226.667px;top:290.833px;width:1.0px;height:30.0px;background:#dfe3eb"></div>
<div class="abs" style="left:2176.667px;top:296.42px;font-size:12px;line-height:18px;height:18px;color:#000;white-space:nowrap;">匹配</div>
<svg class="abs" style="left:2205.82px;top:302.66px" width="9.2" height="5.52" viewBox="0 0 10 6"><path d="M0.8 0.8L5 5L9.2 0.8" fill="none" stroke="#222" stroke-width="1.5"/></svg>
<div class="abs" style="left:2231.667px;top:297.33px;font-size:12px;line-height:18px;height:18px;color:#999;white-space:nowrap;">请选择</div>
<div class="abs" style="left:2486.917px;top:265.75px;font-size:12px;line-height:18px;height:18px;color:#1d2a45;white-space:nowrap;">消息ID</div>
<svg class="abs" style="left:2524.833px;top:267.92px" width="13.333" height="13.333" viewBox="0 0 16 16"><path d="M11.6 0.900L15.200 4.500L5.200 14.500L0.900 15.300L1.700 11Z" fill="none" stroke="#2b3a55" stroke-width="1.400" stroke-linejoin="round"/><path d="M9.300 3.200L12.900 6.800M7.600 15.300H16" stroke="#2b3a55" stroke-width="1.400"/></svg>
<div class="abs" style="left:2486.917px;top:290.833px;width:260.417px;height:30.0px;border:1px solid #dfe3eb;background:#fff"></div>
<div class="abs" style="left:2547.75px;top:290.833px;width:1.0px;height:30.0px;background:#dfe3eb"></div>
<div class="abs" style="left:2497.75px;top:296.42px;font-size:12px;line-height:18px;height:18px;color:#000;white-space:nowrap;">匹配</div>
<svg class="abs" style="left:2526.9px;top:302.66px" width="9.2" height="5.52" viewBox="0 0 10 6"><path d="M0.8 0.8L5 5L9.2 0.8" fill="none" stroke="#222" stroke-width="1.5"/></svg>
<div class="abs" style="left:2552.75px;top:297.33px;font-size:12px;line-height:18px;height:18px;color:#999;white-space:nowrap;">请选择</div>
<div class="abs" style="left:2808.333px;top:265.75px;font-size:12px;line-height:18px;height:18px;color:#1d2a45;white-space:nowrap;">Issue ID</div>
<svg class="abs" style="left:2854.167px;top:267.92px" width="13.333" height="13.333" viewBox="0 0 16 16"><path d="M11.6 0.900L15.200 4.500L5.200 14.500L0.900 15.300L1.700 11Z" fill="none" stroke="#2b3a55" stroke-width="1.400" stroke-linejoin="round"/><path d="M9.300 3.200L12.900 6.800M7.600 15.300H16" stroke="#2b3a55" stroke-width="1.400"/></svg>
<div class="abs" style="left:2808.333px;top:290.833px;width:260.417px;height:30.0px;border:1px solid #dfe3eb;background:#fff"></div>
<div class="abs" style="left:2869.167px;top:290.833px;width:1.0px;height:30.0px;background:#dfe3eb"></div>
<div class="abs" style="left:2819.167px;top:296.42px;font-size:12px;line-height:18px;height:18px;color:#000;white-space:nowrap;">匹配</div>
<svg class="abs" style="left:2848.32px;top:302.66px" width="9.2" height="5.52" viewBox="0 0 10 6"><path d="M0.8 0.8L5 5L9.2 0.8" fill="none" stroke="#222" stroke-width="1.5"/></svg>
<div class="abs" style="left:2874.167px;top:297.33px;font-size:12px;line-height:18px;height:18px;color:#999;white-space:nowrap;">请选择</div>
<div class="abs" style="left:240.0px;top:345.5px;font-size:12px;line-height:18px;height:18px;color:#1d2a45;white-space:nowrap;">问题特征</div>
<svg class="abs" style="left:290.0px;top:347.67px" width="13.333" height="13.333" viewBox="0 0 16 16"><path d="M11.6 0.900L15.200 4.500L5.200 14.500L0.900 15.300L1.700 11Z" fill="none" stroke="#2b3a55" stroke-width="1.400" stroke-linejoin="round"/><path d="M9.300 3.200L12.900 6.800M7.600 15.300H16" stroke="#2b3a55" stroke-width="1.400"/></svg>
<div class="abs" style="left:240.0px;top:370.833px;width:260.417px;height:30.0px;border:1px solid #dfe3eb;background:#fff"></div>
<div class="abs" style="left:300.833px;top:370.833px;width:1.0px;height:30.0px;background:#dfe3eb"></div>
<div class="abs" style="left:250.833px;top:376.42px;font-size:12px;line-height:18px;height:18px;color:#000;white-space:nowrap;">匹配</div>
<svg class="abs" style="left:279.98px;top:382.66px" width="9.2" height="5.52" viewBox="0 0 10 6"><path d="M0.8 0.8L5 5L9.2 0.8" fill="none" stroke="#222" stroke-width="1.5"/></svg>
<div class="abs" style="left:305.833px;top:377.33px;font-size:12px;line-height:18px;height:18px;color:#999;white-space:nowrap;">请选择</div>
<div class="abs" style="left:561.0px;top:345.5px;font-size:12px;line-height:18px;height:18px;color:#1d2a45;white-space:nowrap;">业务下钻</div>
<svg class="abs" style="left:613.5px;top:347.22px" width="13.4" height="13.4" viewBox="0 0 16 16"><circle cx="8" cy="8" r="7.2" fill="none" stroke="#8a8f99" stroke-width="1.1"/><path d="M5.7 6.3a2.3 2.3 0 1 1 3.4 2c-.8 .5-1.1 .9-1.1 1.8" fill="none" stroke="#8a8f99" stroke-width="1.2"/><circle cx="8" cy="12" r=".8" fill="#8a8f99"/></svg>
<div class="abs" style="left:561.0px;top:370.833px;width:260.417px;height:30.0px;border:1px solid #dfe3eb;background:#fff"></div>
<div class="abs" style="left:621.833px;top:370.833px;width:1.0px;height:30.0px;background:#dfe3eb"></div>
<div class="abs" style="left:571.833px;top:376.42px;font-size:12px;line-height:18px;height:18px;color:#000;white-space:nowrap;">匹配</div>
<svg class="abs" style="left:600.98px;top:382.66px" width="9.2" height="5.52" viewBox="0 0 10 6"><path d="M0.8 0.8L5 5L9.2 0.8" fill="none" stroke="#222" stroke-width="1.5"/></svg>
<div class="abs" style="left:626.833px;top:377.33px;font-size:12px;line-height:18px;height:18px;color:#999;white-space:nowrap;">请选择</div>
<div class="abs" style="left:882.083px;top:345.5px;font-size:12px;line-height:18px;height:18px;color:#1d2a45;white-space:nowrap;">个例标签</div>
<svg class="abs" style="left:934.583px;top:347.22px" width="13.4" height="13.4" viewBox="0 0 16 16"><circle cx="8" cy="8" r="7.2" fill="none" stroke="#8a8f99" stroke-width="1.1"/><path d="M5.7 6.3a2.3 2.3 0 1 1 3.4 2c-.8 .5-1.1 .9-1.1 1.8" fill="none" stroke="#8a8f99" stroke-width="1.2"/><circle cx="8" cy="12" r=".8" fill="#8a8f99"/></svg>
<div class="abs" style="left:882.083px;top:370.833px;width:260.417px;height:30.0px;border:1px solid #dfe3eb;background:#fff"></div>
<div class="abs" style="left:942.917px;top:370.833px;width:1.0px;height:30.0px;background:#dfe3eb"></div>
<div class="abs" style="left:892.917px;top:376.42px;font-size:12px;line-height:18px;height:18px;color:#000;white-space:nowrap;">包含</div>
<svg class="abs" style="left:922.07px;top:382.66px" width="9.2" height="5.52" viewBox="0 0 10 6"><path d="M0.8 0.8L5 5L9.2 0.8" fill="none" stroke="#222" stroke-width="1.5"/></svg>
<div class="abs" style="left:947.917px;top:377.33px;font-size:12px;line-height:18px;height:18px;color:#999;white-space:nowrap;">请选择</div>
<div class="abs" style="left:1203.333px;top:345.5px;font-size:12px;line-height:18px;height:18px;color:#1d2a45;white-space:nowrap;">Bundle ID</div>
<svg class="abs" style="left:1258.333px;top:347.67px" width="13.333" height="13.333" viewBox="0 0 16 16"><path d="M11.6 0.900L15.200 4.500L5.200 14.500L0.900 15.300L1.700 11Z" fill="none" stroke="#2b3a55" stroke-width="1.400" stroke-linejoin="round"/><path d="M9.300 3.200L12.900 6.800M7.600 15.300H16" stroke="#2b3a55" stroke-width="1.400"/></svg>
<div class="abs" style="left:1203.333px;top:370.833px;width:260.417px;height:30.0px;border:1px solid #dfe3eb;background:#fff"></div>
<div class="abs" style="left:1264.167px;top:370.833px;width:1.0px;height:30.0px;background:#dfe3eb"></div>
<div class="abs" style="left:1214.167px;top:376.42px;font-size:12px;line-height:18px;height:18px;color:#000;white-space:nowrap;">匹配</div>
<svg class="abs" style="left:1243.32px;top:382.66px" width="9.2" height="5.52" viewBox="0 0 10 6"><path d="M0.8 0.8L5 5L9.2 0.8" fill="none" stroke="#222" stroke-width="1.5"/></svg>
<div class="abs" style="left:1269.167px;top:377.33px;font-size:12px;line-height:18px;height:18px;color:#999;white-space:nowrap;">请选择</div>
<div class="abs" style="left:1524.167px;top:345.5px;font-size:12px;line-height:18px;height:18px;color:#1d2a45;white-space:nowrap;">监控线程</div>
<svg class="abs" style="left:1574.167px;top:347.67px" width="13.333" height="13.333" viewBox="0 0 16 16"><path d="M11.6 0.900L15.200 4.500L5.200 14.500L0.900 15.300L1.700 11Z" fill="none" stroke="#2b3a55" stroke-width="1.400" stroke-linejoin="round"/><path d="M9.300 3.200L12.900 6.800M7.600 15.300H16" stroke="#2b3a55" stroke-width="1.400"/></svg>
<div class="abs" style="left:1524.167px;top:370.833px;width:260.417px;height:30.0px;border:1px solid #dfe3eb;background:#fff"></div>
<div class="abs" style="left:1585.0px;top:370.833px;width:1.0px;height:30.0px;background:#dfe3eb"></div>
<div class="abs" style="left:1535.0px;top:376.42px;font-size:12px;line-height:18px;height:18px;color:#000;white-space:nowrap;">匹配</div>
<svg class="abs" style="left:1564.15px;top:382.66px" width="9.2" height="5.52" viewBox="0 0 10 6"><path d="M0.8 0.8L5 5L9.2 0.8" fill="none" stroke="#222" stroke-width="1.5"/></svg>
<div class="abs" style="left:1590.0px;top:377.33px;font-size:12px;line-height:18px;height:18px;color:#999;white-space:nowrap;">请选择</div>
<div class="abs" style="left:1844.75px;top:345.5px;font-size:12px;line-height:18px;height:18px;color:#1d2a45;white-space:nowrap;">系统堆栈</div>
<svg class="abs" style="left:1897.25px;top:347.22px" width="13.4" height="13.4" viewBox="0 0 16 16"><circle cx="8" cy="8" r="7.2" fill="none" stroke="#8a8f99" stroke-width="1.1"/><path d="M5.7 6.3a2.3 2.3 0 1 1 3.4 2c-.8 .5-1.1 .9-1.1 1.8" fill="none" stroke="#8a8f99" stroke-width="1.2"/><circle cx="8" cy="12" r=".8" fill="#8a8f99"/></svg>
<div class="abs" style="left:1844.75px;top:370.833px;width:199.583px;height:30.0px;border:1px solid #dfe3eb;background:#fff"></div>
<div class="abs" style="left:1855.583px;top:376.58px;font-size:12px;line-height:18px;height:18px;color:#888;white-space:nowrap;">所有</div>
<svg class="abs" style="left:2023.07px;top:382.66px" width="9.2" height="5.52" viewBox="0 0 10 6"><path d="M0.8 0.8L5 5L9.2 0.8" fill="none" stroke="#222" stroke-width="1.5"/></svg>
<div class="abs" style="left:2165.833px;top:345.5px;font-size:12px;line-height:18px;height:18px;color:#1d2a45;white-space:nowrap;">卡顿耗时（毫秒）</div>
<svg class="abs" style="left:2265.417px;top:347.22px" width="13.4" height="13.4" viewBox="0 0 16 16"><circle cx="8" cy="8" r="7.2" fill="none" stroke="#8a8f99" stroke-width="1.1"/><path d="M5.7 6.3a2.3 2.3 0 1 1 3.4 2c-.8 .5-1.1 .9-1.1 1.8" fill="none" stroke="#8a8f99" stroke-width="1.2"/><circle cx="8" cy="12" r=".8" fill="#8a8f99"/></svg>
<div class="abs" style="left:2165.833px;top:370.833px;width:258.75px;height:30.0px;border:1px solid #dfe3eb;background:#fff"></div>
<div class="abs" style="left:2265.0px;top:370.833px;width:1.0px;height:30.0px;background:#dfe3eb"></div>
<div class="abs" style="left:2176.667px;top:376.42px;font-size:12px;line-height:18px;height:18px;color:#000;white-space:nowrap;">大于</div>
<svg class="abs" style="left:2244.15px;top:382.66px" width="9.2" height="5.52" viewBox="0 0 10 6"><path d="M0.8 0.8L5 5L9.2 0.8" fill="none" stroke="#222" stroke-width="1.5"/></svg>
<div class="abs" style="left:2486.917px;top:345.5px;font-size:12px;line-height:18px;height:18px;color:#1d2a45;white-space:nowrap;">使用时长（秒）</div>
<svg class="abs" style="left:2574.833px;top:347.22px" width="13.4" height="13.4" viewBox="0 0 16 16"><circle cx="8" cy="8" r="7.2" fill="none" stroke="#8a8f99" stroke-width="1.1"/><path d="M5.7 6.3a2.3 2.3 0 1 1 3.4 2c-.8 .5-1.1 .9-1.1 1.8" fill="none" stroke="#8a8f99" stroke-width="1.2"/><circle cx="8" cy="12" r=".8" fill="#8a8f99"/></svg>
<div class="abs" style="left:2486.917px;top:370.833px;width:258.75px;height:30.0px;border:1px solid #dfe3eb;background:#fff"></div>
<div class="abs" style="left:2586.083px;top:370.833px;width:1.0px;height:30.0px;background:#dfe3eb"></div>
<div class="abs" style="left:2497.75px;top:376.42px;font-size:12px;line-height:18px;height:18px;color:#000;white-space:nowrap;">大于</div>
<svg class="abs" style="left:2565.23px;top:382.66px" width="9.2" height="5.52" viewBox="0 0 10 6"><path d="M0.8 0.8L5 5L9.2 0.8" fill="none" stroke="#222" stroke-width="1.5"/></svg>
<div class="abs" style="left:2808.333px;top:345.5px;font-size:12px;line-height:18px;height:18px;color:#1d2a45;white-space:nowrap;">监控粒度</div>
<svg class="abs" style="left:2858.333px;top:347.67px" width="13.333" height="13.333" viewBox="0 0 16 16"><path d="M11.6 0.900L15.200 4.500L5.200 14.500L0.900 15.300L1.700 11Z" fill="none" stroke="#2b3a55" stroke-width="1.400" stroke-linejoin="round"/><path d="M9.300 3.200L12.900 6.800M7.600 15.300H16" stroke="#2b3a55" stroke-width="1.400"/></svg>
<div class="abs" style="left:2808.333px;top:370.833px;width:260.417px;height:30.0px;border:1px solid #dfe3eb;background:#fff"></div>
<div class="abs" style="left:2869.167px;top:370.833px;width:1.0px;height:30.0px;background:#dfe3eb"></div>
<div class="abs" style="left:2819.167px;top:376.42px;font-size:12px;line-height:18px;height:18px;color:#000;white-space:nowrap;">匹配</div>
<svg class="abs" style="left:2848.32px;top:382.66px" width="9.2" height="5.52" viewBox="0 0 10 6"><path d="M0.8 0.8L5 5L9.2 0.8" fill="none" stroke="#222" stroke-width="1.5"/></svg>
<div class="abs" style="left:2874.167px;top:377.33px;font-size:12px;line-height:18px;height:18px;color:#999;white-space:nowrap;">请选择</div>
<div class="abs" style="left:240.0px;top:425.5px;font-size:12px;line-height:18px;height:18px;color:#1d2a45;white-space:nowrap;">ROM</div>
<svg class="abs" style="left:270.0px;top:427.67px" width="13.333" height="13.333" viewBox="0 0 16 16"><path d="M11.6 0.900L15.200 4.500L5.200 14.500L0.900 15.300L1.700 11Z" fill="none" stroke="#2b3a55" stroke-width="1.400" stroke-linejoin="round"/><path d="M9.300 3.200L12.900 6.800M7.600 15.300H16" stroke="#2b3a55" stroke-width="1.400"/></svg>
<div class="abs" style="left:240.0px;top:450.833px;width:260.417px;height:30.0px;border:1px solid #dfe3eb;background:#fff"></div>
<div class="abs" style="left:300.833px;top:450.833px;width:1.0px;height:30.0px;background:#dfe3eb"></div>
<div class="abs" style="left:250.833px;top:456.42px;font-size:12px;line-height:18px;height:18px;color:#000;white-space:nowrap;">匹配</div>
<svg class="abs" style="left:279.98px;top:462.66px" width="9.2" height="5.52" viewBox="0 0 10 6"><path d="M0.8 0.8L5 5L9.2 0.8" fill="none" stroke="#222" stroke-width="1.5"/></svg>
<div class="abs" style="left:305.833px;top:457.33px;font-size:12px;line-height:18px;height:18px;color:#999;white-space:nowrap;">请选择</div>
<div class="abs" style="left:561.0px;top:425.5px;font-size:12px;line-height:18px;height:18px;color:#1d2a45;white-space:nowrap;">自定义维度</div>
<div class="abs" style="left:561.0px;top:450.833px;width:158.333px;height:30.0px;border:1px solid #dfe3eb;background:#fff"></div>
<div class="abs" style="left:571.833px;top:456.58px;font-size:12px;line-height:18px;height:18px;color:#000;white-space:nowrap;">多个值通过按回车分隔</div>
<svg class="abs" style="left:697.65px;top:462.66px" width="9.2" height="5.52" viewBox="0 0 10 6"><path d="M0.8 0.8L5 5L9.2 0.8" fill="none" stroke="#222" stroke-width="1.5"/></svg>
<div class="abs" style="left:882.083px;top:425.5px;font-size:12px;line-height:18px;height:18px;color:#1d2a45;white-space:nowrap;">自定义字段</div>
<div class="abs" style="left:882.083px;top:450.833px;width:158.333px;height:30.0px;border:1px solid #dfe3eb;background:#fff"></div>
<div class="abs" style="left:892.917px;top:456.58px;font-size:12px;line-height:18px;height:18px;color:#000;white-space:nowrap;">多个值通过按回车分隔</div>
<svg class="abs" style="left:1018.73px;top:462.66px" width="9.2" height="5.52" viewBox="0 0 10 6"><path d="M0.8 0.8L5 5L9.2 0.8" fill="none" stroke="#222" stroke-width="1.5"/></svg>
<div class="abs" style="left:3075.0px;top:501.25px;width:65.833px;height:30.0px;background:#0052d9;color:#fff;text-align:center;line-height:30.0px;font-size:12px">查询</div>
<div class="abs" style="left:220.0px;top:567.5px;width:2940.833px;height:433.833px;background:#fff"></div>
<div class="abs" style="left:251.667px;top:590.58px;font-size:16px;line-height:24px;height:24px;color:#000;white-space:nowrap;font-weight:bold;">趋势分析</div>
<div class="abs" style="left:251.667px;top:643.333px;width:86.667px;height:30.0px;border:1px solid #dfe3eb;background:#fff"></div>
<div class="abs" style="left:262.5px;top:649.08px;font-size:12px;line-height:18px;height:18px;color:#000;white-space:nowrap;">百分比</div>
<svg class="abs" style="left:316.65px;top:655.16px" width="9.2" height="5.52" viewBox="0 0 10 6"><path d="M0.8 0.8L5 5L9.2 0.8" fill="none" stroke="#222" stroke-width="1.5"/></svg>
<div class="abs" style="left:358.333px;top:645.0px;width:136.667px;height:30.0px;border:1px solid #dfe3eb;background:#fff"></div>
<div class="abs" style="left:358.333px;top:645.0px;width:69.167px;height:30.0px;border:1px solid #dfe3eb;background:#f0f2f6"></div>
<div class="abs" style="left:368.333px;top:650.83px;font-size:12px;line-height:18px;height:18px;color:#000;white-space:nowrap;">统计维度</div>
<div class="abs" style="left:437.5px;top:650.83px;font-size:12px;line-height:18px;height:18px;color:#000;white-space:nowrap;">5分钟</div>
<svg class="abs" style="left:473.73px;top:657.07px" width="9.2" height="5.52" viewBox="0 0 10 6"><path d="M0.8 0.8L5 5L9.2 0.8" fill="none" stroke="#222" stroke-width="1.5"/></svg>
<div class="abs" style="left:2929.167px;top:652.5px;width:199.667px;height:30.0px;border:1px solid #dfe3eb;background:#fff"></div>
<div class="abs" style="left:2940.0px;top:658.25px;font-size:12px;line-height:18px;height:18px;color:#000;white-space:nowrap;">卡顿率</div>
<svg class="abs" style="left:3107.48px;top:664.32px" width="9.2" height="5.52" viewBox="0 0 10 6"><path d="M0.8 0.8L5 5L9.2 0.8" fill="none" stroke="#222" stroke-width="1.5"/></svg>
<svg class="abs" style="left:2980.417px;top:660.7px" width="14.6" height="14.6" viewBox="0 0 16 16"><circle cx="8" cy="8" r="7" fill="none" stroke="#222" stroke-width="1.3"/><path d="M8 7v5" stroke="#222" stroke-width="1.4"/><circle cx="8" cy="4.7" r=".9" fill="#222"/></svg>
<svg class="abs" style="left:0;top:700.0px" width="3200.0" height="225.0" viewBox="0 840 3840 270"><line x1="349" x2="3719" y1="859.4" y2="859.4" stroke="#e3e9f5" stroke-width="1.6"/><line x1="349" x2="3719" y1="895.5" y2="895.5" stroke="#e3e9f5" stroke-width="1.6"/><line x1="349" x2="3719" y1="931.7" y2="931.7" stroke="#e3e9f5" stroke-width="1.6"/><line x1="349" x2="3719" y1="968.5" y2="968.5" stroke="#e3e9f5" stroke-width="1.6"/><line x1="349" x2="3719" y1="1004.8" y2="1004.8" stroke="#e3e9f5" stroke-width="1.6"/><line x1="349" x2="3719" y1="1041.1" y2="1041.1" stroke="#e3e9f5" stroke-width="1.6"/><line x1="349" x2="3719" y1="1078.1" y2="1078.1" stroke="#dae1ef" stroke-width="1.6"/><polyline points="357.9,1000.4 375.4,1004.9 392.8,983.5 410.3,946.7 427.7,1003.3 445.2,998.9 462.7,986.8 480.1,1003.7 497.6,998.7 515.0,1008.6 532.5,995.6 550.0,992.9 567.4,994.2 584.9,997.1 602.4,983.9 619.8,995.2 637.3,999.5 654.7,1003.5 672.2,1001.6 689.7,998.3 707.1,982.6 724.6,999.7 742.0,990.5 759.5,978.1 777.0,1003.3 794.4,981.2 811.9,983.0 829.3,963.9 846.8,1010.7 864.3,989.0 881.7,993.2 899.2,977.1 916.7,966.1 934.1,1014.6 951.6,998.7 969.0,996.7 986.5,1003.7 1004.0,965.7 1021.4,1000.8 1038.9,987.8 1056.3,983.9 1073.8,960.6 1091.3,984.9 1108.7,1003.9 1126.2,1005.1 1143.6,994.8 1161.1,978.9 1178.6,973.1 1196.0,995.8 1213.5,1007.0 1230.9,994.0 1248.4,984.3 1265.9,982.2 1283.3,1016.5 1300.8,989.2 1318.3,977.3 1335.7,990.1 1353.2,1003.1 1370.6,991.9 1388.1,969.6 1405.6,989.8 1423.0,956.9 1440.5,1012.3 1457.9,995.6 1475.4,1005.3 1492.9,997.7 1510.3,1016.9 1527.8,982.6 1545.2,1000.6 1562.7,1001.4 1580.2,985.3 1597.6,971.9 1615.1,1000.0 1632.6,975.0 1650.0,969.6 1667.5,996.7 1684.9,1006.4 1702.4,1000.6 1719.9,1010.1 1737.3,992.9 1754.8,990.5 1772.2,1001.0 1789.7,996.9 1807.2,1007.4 1824.6,1000.6 1842.1,1002.6 1859.5,1011.7 1877.0,1010.1 1894.5,1015.0 1911.9,1020.2 1929.4,1011.3 1946.9,1006.8 1964.3,1011.1 1981.8,1013.4 1999.2,1013.4 2016.7,1013.4 2034.2,1011.1 2051.6,1015.4 2069.1,1015.4 2086.5,1018.1 2104.0,1004.7 2121.5,1025.1 2138.9,1020.4 2156.4,1013.0 2173.8,1018.9 2191.3,1019.4 2208.8,1020.2 2226.2,1015.2 2243.7,1016.9 2261.1,1019.3 2278.6,1022.7 2296.1,1020.8 2313.5,1015.6 2331.0,1000.0 2348.5,1016.9 2365.9,1015.4 2383.4,1014.8 2400.8,1016.9 2418.3,1015.6 2435.8,1008.8 2453.2,1013.4 2470.7,1014.8 2488.1,1002.8 2505.6,1012.3 2523.1,1014.8 2540.5,1014.0 2558.0,1011.7 2575.4,1018.5 2592.9,1009.9 2610.4,1014.4 2627.8,1016.5 2645.3,1018.9 2662.8,1008.6 2680.2,1011.5 2697.7,1013.4 2715.1,1010.7 2732.6,1013.8 2750.1,1004.3 2767.5,1010.9 2785.0,1016.0 2802.4,1013.6 2819.9,1006.4 2837.4,1013.6 2854.8,1019.8 2872.3,1007.0 2889.7,998.1 2907.2,1001.2 2924.7,1015.8 2942.1,876.2 2959.6,1012.7 2977.0,1001.2 2994.5,1011.7 3012.0,1008.8 3029.4,1009.7 3046.9,994.8 3064.4,1002.4 3081.8,999.7 3099.3,1011.7 3116.7,1014.0 3134.2,1007.4 3151.7,1011.5 3169.1,1015.6 3186.6,1000.8 3204.0,1007.4 3221.5,1014.0 3239.0,1008.0 3256.4,1006.1 3273.9,1011.1 3291.3,1006.6 3308.8,1007.8 3326.3,1011.3 3343.7,1010.3 3361.2,1008.6 3378.7,1004.7 3396.1,1008.2 3413.6,1011.7 3431.0,1012.3 3448.5,1012.8 3466.0,1010.9 3483.4,1010.9 3500.9,1014.4 3518.3,1011.5 3535.8,1012.1 3553.3,1009.5 3570.7,1008.0 3588.2,1011.5 3605.6,1003.0 3623.1,1011.5 3640.6,1016.5 3658.0,1013.4 3675.5,1018.1 3693.0,1013.2 3710.4,1016.9" fill="none" stroke="#0052d9" stroke-width="2.5" stroke-linejoin="round" stroke-linecap="round"/><circle cx="357.9" cy="1000.4" r="3.7" fill="#0052d9"/><circle cx="410.3" cy="946.7" r="3.7" fill="#0052d9"/><circle cx="462.7" cy="986.8" r="3.7" fill="#0052d9"/><circle cx="515.0" cy="1008.6" r="3.7" fill="#0052d9"/><circle cx="567.4" cy="994.2" r="3.7" fill="#0052d9"/><circle cx="619.8" cy="995.2" r="3.7" fill="#0052d9"/><circle cx="672.2" cy="1001.6" r="3.7" fill="#0052d9"/><circle cx="724.6" cy="999.7" r="3.7" fill="#0052d9"/><circle cx="777.0" cy="1003.3" r="3.7" fill="#0052d9"/><circle cx="829.3" cy="963.9" r="3.7" fill="#0052d9"/><circle cx="881.7" cy="993.2" r="3.7" fill="#0052d9"/><circle cx="934.1" cy="1014.6" r="3.7" fill="#0052d9"/><circle cx="986.5" cy="1003.7" r="3.7" fill="#0052d9"/><circle cx="1038.9" cy="987.8" r="3.7" fill="#0052d9"/><circle cx="1091.3" cy="984.9" r="3.7" fill="#0052d9"/><circle cx="1143.6" cy="994.8" r="3.7" fill="#0052d9"/><circle cx="1196.0" cy="995.8" r="3.7" fill="#0052d9"/><circle cx="1248.4" cy="984.3" r="3.7" fill="#0052d9"/><circle cx="1300.8" cy="989.2" r="3.7" fill="#0052d9"/><circle cx="1353.2" cy="1003.1" r="3.7" fill="#0052d9"/><circle cx="1405.6" cy="989.8" r="3.7" fill="#0052d9"/><circle cx="1457.9" cy="995.6" r="3.7" fill="#0052d9"/><circle cx="1510.3" cy="1016.9" r="3.7" fill="#0052d9"/><circle cx="1562.7" cy="1001.4" r="3.7" fill="#0052d9"/><circle cx="1615.1" cy="1000.0" r="3.7" fill="#0052d9"/><circle cx="1667.5" cy="996.7" r="3.7" fill="#0052d9"/><circle cx="1719.9" cy="1010.1" r="3.7" fill="#0052d9"/><circle cx="1772.2" cy="1001.0" r="3.7" fill="#0052d9"/><circle cx="1824.6" cy="1000.6" r="3.7" fill="#0052d9"/><circle cx="1877.0" cy="1010.1" r="3.7" fill="#0052d9"/><circle cx="1929.4" cy="1011.3" r="3.7" fill="#0052d9"/><circle cx="1981.8" cy="1013.4" r="3.7" fill="#0052d9"/><circle cx="2034.2" cy="1011.1" r="3.7" fill="#0052d9"/><circle cx="2086.5" cy="1018.1" r="3.7" fill="#0052d9"/><circle cx="2138.9" cy="1020.4" r="3.7" fill="#0052d9"/><circle cx="2191.3" cy="1019.4" r="3.7" fill="#0052d9"/><circle cx="2243.7" cy="1016.9" r="3.7" fill="#0052d9"/><circle cx="2296.1" cy="1020.8" r="3.7" fill="#0052d9"/><circle cx="2348.5" cy="1016.9" r="3.7" fill="#0052d9"/><circle cx="2400.8" cy="1016.9" r="3.7" fill="#0052d9"/><circle cx="2453.2" cy="1013.4" r="3.7" fill="#0052d9"/><circle cx="2505.6" cy="1012.3" r="3.7" fill="#0052d9"/><circle cx="2558.0" cy="1011.7" r="3.7" fill="#0052d9"/><circle cx="2610.4" cy="1014.4" r="3.7" fill="#0052d9"/><circle cx="2662.8" cy="1008.6" r="3.7" fill="#0052d9"/><circle cx="2715.1" cy="1010.7" r="3.7" fill="#0052d9"/><circle cx="2767.5" cy="1010.9" r="3.7" fill="#0052d9"/><circle cx="2819.9" cy="1006.4" r="3.7" fill="#0052d9"/><circle cx="2872.3" cy="1007.0" r="3.7" fill="#0052d9"/><circle cx="2924.7" cy="1015.8" r="3.7" fill="#0052d9"/><circle cx="2977.0" cy="1001.2" r="3.7" fill="#0052d9"/><circle cx="3029.4" cy="1009.7" r="3.7" fill="#0052d9"/><circle cx="3081.8" cy="999.7" r="3.7" fill="#0052d9"/><circle cx="3134.2" cy="1007.4" r="3.7" fill="#0052d9"/><circle cx="3186.6" cy="1000.8" r="3.7" fill="#0052d9"/><circle cx="3239.0" cy="1008.0" r="3.7" fill="#0052d9"/><circle cx="3291.3" cy="1006.6" r="3.7" fill="#0052d9"/><circle cx="3343.7" cy="1010.3" r="3.7" fill="#0052d9"/><circle cx="3396.1" cy="1008.2" r="3.7" fill="#0052d9"/><circle cx="3448.5" cy="1012.8" r="3.7" fill="#0052d9"/><circle cx="3500.9" cy="1014.4" r="3.7" fill="#0052d9"/><circle cx="3553.3" cy="1009.5" r="3.7" fill="#0052d9"/><circle cx="3605.6" cy="1003.0" r="3.7" fill="#0052d9"/><circle cx="3658.0" cy="1013.4" r="3.7" fill="#0052d9"/><circle cx="3710.4" cy="1016.9" r="3.7" fill="#0052d9"/></svg>
<div class="abs" style="left:261.667px;top:706.08px;font-size:12px;line-height:18px;height:18px;color:#7f8ba5;white-space:nowrap;">6 %</div>
<div class="abs" style="left:261.667px;top:736.17px;font-size:12px;line-height:18px;height:18px;color:#7f8ba5;white-space:nowrap;">5 %</div>
<div class="abs" style="left:261.667px;top:766.92px;font-size:12px;line-height:18px;height:18px;color:#7f8ba5;white-space:nowrap;">4 %</div>
<div class="abs" style="left:261.667px;top:797.08px;font-size:12px;line-height:18px;height:18px;color:#7f8ba5;white-space:nowrap;">3 %</div>
<div class="abs" style="left:261.667px;top:827.17px;font-size:12px;line-height:18px;height:18px;color:#7f8ba5;white-space:nowrap;">2 %</div>
<div class="abs" style="left:261.667px;top:857.33px;font-size:12px;line-height:18px;height:18px;color:#7f8ba5;white-space:nowrap;">1 %</div>
<div class="abs" style="left:261.667px;top:887.75px;font-size:12px;line-height:18px;height:18px;color:#7f8ba5;white-space:nowrap;">0 %</div>
<div class="abs" style="left:268.33px;top:902.17px;width:60px;text-align:center;font-size:12px;line-height:18px;color:#666">00:00</div>
<div class="abs" style="left:311.99px;top:902.17px;width:60px;text-align:center;font-size:12px;line-height:18px;color:#666">00:15</div>
<div class="abs" style="left:355.64px;top:902.17px;width:60px;text-align:center;font-size:12px;line-height:18px;color:#666">00:30</div>
<div class="abs" style="left:399.29px;top:902.17px;width:60px;text-align:center;font-size:12px;line-height:18px;color:#666">00:45</div>
<div class="abs" style="left:442.94px;top:902.17px;width:60px;text-align:center;font-size:12px;line-height:18px;color:#666">01:00</div>
<div class="abs" style="left:486.6px;top:902.17px;width:60px;text-align:center;font-size:12px;line-height:18px;color:#666">01:15</div>
<div class="abs" style="left:530.25px;top:902.17px;width:60px;text-align:center;font-size:12px;line-height:18px;color:#666">01:30</div>
<div class="abs" style="left:573.9px;top:902.17px;width:60px;text-align:center;font-size:12px;line-height:18px;color:#666">01:45</div>
<div class="abs" style="left:617.55px;top:902.17px;width:60px;text-align:center;font-size:12px;line-height:18px;color:#666">02:00</div>
<div class="abs" style="left:661.21px;top:902.17px;width:60px;text-align:center;font-size:12px;line-height:18px;color:#666">02:15</div>
<div class="abs" style="left:704.86px;top:902.17px;width:60px;text-align:center;font-size:12px;line-height:18px;color:#666">02:30</div>
<div class="abs" style="left:748.51px;top:902.17px;width:60px;text-align:center;font-size:12px;line-height:18px;color:#666">02:45</div>
<div class="abs" style="left:792.16px;top:902.17px;width:60px;text-align:center;font-size:12px;line-height:18px;color:#666">03:00</div>
<div class="abs" style="left:835.82px;top:902.17px;width:60px;text-align:center;font-size:12px;line-height:18px;color:#666">03:15</div>
<div class="abs" style="left:879.47px;top:902.17px;width:60px;text-align:center;font-size:12px;line-height:18px;color:#666">03:30</div>
<div class="abs" style="left:923.12px;top:902.17px;width:60px;text-align:center;font-size:12px;line-height:18px;color:#666">03:45</div>
<div class="abs" style="left:966.77px;top:902.17px;width:60px;text-align:center;font-size:12px;line-height:18px;color:#666">04:00</div>
<div class="abs" style="left:1010.43px;top:902.17px;width:60px;text-align:center;font-size:12px;line-height:18px;color:#666">04:15</div>
<div class="abs" style="left:1054.08px;top:902.17px;width:60px;text-align:center;font-size:12px;line-height:18px;color:#666">04:30</div>
<div class="abs" style="left:1097.73px;top:902.17px;width:60px;text-align:center;font-size:12px;line-height:18px;color:#666">04:45</div>
<div class="abs" style="left:1141.38px;top:902.17px;width:60px;text-align:center;font-size:12px;line-height:18px;color:#666">05:00</div>
<div class="abs" style="left:1185.04px;top:902.17px;width:60px;text-align:center;font-size:12px;line-height:18px;color:#666">05:15</div>
<div class="abs" style="left:1228.69px;top:902.17px;width:60px;text-align:center;font-size:12px;line-height:18px;color:#666">05:30</div>
<div class="abs" style="left:1272.34px;top:902.17px;width:60px;text-align:center;font-size:12px;line-height:18px;color:#666">05:45</div>
<div class="abs" style="left:1315.99px;top:902.17px;width:60px;text-align:center;font-size:12px;line-height:18px;color:#666">06:00</div>
<div class="abs" style="left:1359.65px;top:902.17px;width:60px;text-align:center;font-size:12px;line-height:18px;color:#666">06:15</div>
<div class="abs" style="left:1403.3px;top:902.17px;width:60px;text-align:center;font-size:12px;line-height:18px;color:#666">06:30</div>
<div class="abs" style="left:1446.95px;top:902.17px;width:60px;text-align:center;font-size:12px;line-height:18px;color:#666">06:45</div>
<div class="abs" style="left:1490.6px;top:902.17px;width:60px;text-align:center;font-size:12px;line-height:18px;color:#666">07:00</div>
<div class="abs" style="left:1534.26px;top:902.17px;width:60px;text-align:center;font-size:12px;line-height:18px;color:#666">07:15</div>
<div class="abs" style="left:1577.91px;top:902.17px;width:60px;text-align:center;font-size:12px;line-height:18px;color:#666">07:30</div>
<div class="abs" style="left:1621.56px;top:902.17px;width:60px;text-align:center;font-size:12px;line-height:18px;color:#666">07:45</div>
<div class="abs" style="left:1665.21px;top:902.17px;width:60px;text-align:center;font-size:12px;line-height:18px;color:#666">08:00</div>
<div class="abs" style="left:1708.87px;top:902.17px;width:60px;text-align:center;font-size:12px;line-height:18px;color:#666">08:15</div>
<div class="abs" style="left:1752.52px;top:902.17px;width:60px;text-align:center;font-size:12px;line-height:18px;color:#666">08:30</div>
<div class="abs" style="left:1796.17px;top:902.17px;width:60px;text-align:center;font-size:12px;line-height:18px;color:#666">08:45</div>
<div class="abs" style="left:1839.82px;top:902.17px;width:60px;text-align:center;font-size:12px;line-height:18px;color:#666">09:00</div>
<div class="abs" style="left:1883.48px;top:902.17px;width:60px;text-align:center;font-size:12px;line-height:18px;color:#666">09:15</div>
<div class="abs" style="left:1927.13px;top:902.17px;width:60px;text-align:center;font-size:12px;line-height:18px;color:#666">09:30</div>
<div class="abs" style="left:1970.78px;top:902.17px;width:60px;text-align:center;font-size:12px;line-height:18px;color:#666">09:45</div>
<div class="abs" style="left:2014.43px;top:902.17px;width:60px;text-align:center;font-size:12px;line-height:18px;color:#666">10:00</div>
<div class="abs" style="left:2058.09px;top:902.17px;width:60px;text-align:center;font-size:12px;line-height:18px;color:#666">10:15</div>
<div class="abs" style="left:2101.74px;top:902.17px;width:60px;text-align:center;font-size:12px;line-height:18px;color:#666">10:30</div>
<div class="abs" style="left:2145.39px;top:902.17px;width:60px;text-align:center;font-size:12px;line-height:18px;color:#666">10:45</div>
<div class="abs" style="left:2189.04px;top:902.17px;width:60px;text-align:center;font-size:12px;line-height:18px;color:#666">11:00</div>
<div class="abs" style="left:2232.7px;top:902.17px;width:60px;text-align:center;font-size:12px;line-height:18px;color:#666">11:15</div>
<div class="abs" style="left:2276.35px;top:902.17px;width:60px;text-align:center;font-size:12px;line-height:18px;color:#666">11:30</div>
<div class="abs" style="left:2320.0px;top:902.17px;width:60px;text-align:center;font-size:12px;line-height:18px;color:#666">11:45</div>
<div class="abs" style="left:2363.65px;top:902.17px;width:60px;text-align:center;font-size:12px;line-height:18px;color:#666">12:00</div>
<div class="abs" style="left:2407.31px;top:902.17px;width:60px;text-align:center;font-size:12px;line-height:18px;color:#666">12:15</div>
<div class="abs" style="left:2450.96px;top:902.17px;width:60px;text-align:center;font-size:12px;line-height:18px;color:#666">12:30</div>
<div class="abs" style="left:2494.61px;top:902.17px;width:60px;text-align:center;font-size:12px;line-height:18px;color:#666">12:45</div>
<div class="abs" style="left:2538.26px;top:902.17px;width:60px;text-align:center;font-size:12px;line-height:18px;color:#666">13:00</div>
<div class="abs" style="left:2581.92px;top:902.17px;width:60px;text-align:center;font-size:12px;line-height:18px;color:#666">13:15</div>
<div class="abs" style="left:2625.57px;top:902.17px;width:60px;text-align:center;font-size:12px;line-height:18px;color:#666">13:30</div>
<div class="abs" style="left:2669.22px;top:902.17px;width:60px;text-align:center;font-size:12px;line-height:18px;color:#666">13:45</div>
<div class="abs" style="left:2712.87px;top:902.17px;width:60px;text-align:center;font-size:12px;line-height:18px;color:#666">14:00</div>
<div class="abs" style="left:2756.53px;top:902.17px;width:60px;text-align:center;font-size:12px;line-height:18px;color:#666">14:15</div>
<div class="abs" style="left:2800.18px;top:902.17px;width:60px;text-align:center;font-size:12px;line-height:18px;color:#666">14:30</div>
<div class="abs" style="left:2843.83px;top:902.17px;width:60px;text-align:center;font-size:12px;line-height:18px;color:#666">14:45</div>
<div class="abs" style="left:2887.48px;top:902.17px;width:60px;text-align:center;font-size:12px;line-height:18px;color:#666">15:00</div>
<div class="abs" style="left:2931.14px;top:902.17px;width:60px;text-align:center;font-size:12px;line-height:18px;color:#666">15:15</div>
<div class="abs" style="left:2974.79px;top:902.17px;width:60px;text-align:center;font-size:12px;line-height:18px;color:#666">15:30</div>
<div class="abs" style="left:3018.44px;top:902.17px;width:60px;text-align:center;font-size:12px;line-height:18px;color:#666">15:45</div>
<div class="abs" style="left:3062.09px;top:902.17px;width:60px;text-align:center;font-size:12px;line-height:18px;color:#666">16:00</div>
<div class="abs" style="left:3074.0px;top:828.08px;font-size:12px;line-height:18px;height:18px;color:#333;white-space:nowrap;">统计中</div>
<div class="abs" style="left:220.0px;top:1017.25px;width:2940.833px;height:582.75px;background:#fff;box-shadow:0 1px 4px rgba(40,50,80,0.10)"></div>
<div class="abs" style="left:267.917px;top:1048.08px;font-size:12px;line-height:18px;height:18px;color:#000;white-space:nowrap;font-weight:bold;">问题列表</div>
<div class="abs" style="left:355.417px;top:1048.08px;font-size:12px;line-height:18px;height:18px;color:#666;white-space:nowrap;">统计分布</div>
<div class="abs" style="left:251.667px;top:1070.667px;width:2877.5px;height:1.0px;background:#e3e6ec"></div>
<div class="abs" style="left:267.917px;top:1069.75px;width:47.5px;height:1.917px;background:#0052d9"></div>
<div class="abs" style="left:251.667px;top:1082.67px;font-size:14px;line-height:20px;height:20px;color:#222;white-space:nowrap;">卡顿平均耗时&nbsp;&nbsp;(毫秒)</div>
<div class="abs" style="left:251.667px;top:1104.167px;width:120.0px;height:30.0px;border:1px solid #dfe3eb;background:#fff"></div>
<div class="abs" style="left:262.5px;top:1109.92px;font-size:12px;line-height:18px;height:18px;color:#000;white-space:nowrap;">范围</div>
<svg class="abs" style="left:350.82px;top:1115.99px" width="9.2" height="5.52" viewBox="0 0 10 6"><path d="M0.8 0.8L5 5L9.2 0.8" fill="none" stroke="#222" stroke-width="1.5"/></svg>
<div class="abs" style="left:379.667px;top:1110.75px;font-size:12px;line-height:18px;height:18px;color:#000;white-space:nowrap;">选择范围</div>
<svg class="abs" style="left:532.48px;top:1116.24px" width="9.2" height="5.52" viewBox="0 0 10 6"><path d="M0.8 0.8L5 5L9.2 0.8" fill="none" stroke="#222" stroke-width="1.5"/></svg>
<div class="abs" style="left:251.667px;top:1153.667px;width:2877.5px;height:446.333px;background:#fff;box-shadow:0 0 3px rgba(30,40,70,0.07)"></div>
<div class="abs" style="left:284.167px;top:1200.42px;font-size:14px;line-height:20px;height:20px;color:#151515;white-space:nowrap;">卡顿问题列表</div>
<div class="abs" style="left:377.5px;top:1201.83px;font-size:12px;line-height:18px;height:18px;color:#888;white-space:nowrap;">满足条件的问题共1971个</div>
<div class="abs" style="left:3000.833px;top:1195.833px;width:91.667px;height:30.0px;background:#0052d9"></div>
<svg class="abs" style="left:3021.667px;top:1204.5px" width="16" height="16" viewBox="0 0 16 16"><path d="M6.6 1.3h2.8l.4 1.9l1.3 .7l1.8-.6l1.4 2.4l-1.4 1.3v1.5l1.4 1.3l-1.4 2.4l-1.8-.6l-1.3 .7l-.4 1.9H6.6l-.4-1.9l-1.3-.7l-1.8 .6l-1.4-2.4l1.4-1.3V7.2L1.7 5.9l1.4-2.4l1.8 .6l1.3-.7z" fill="none" stroke="#fff" stroke-width="1.2" stroke-linejoin="round"/><circle cx="8" cy="8" r="2.2" fill="none" stroke="#fff" stroke-width="1.2"/></svg>
<div class="abs" style="left:3047.917px;top:1201.83px;font-size:12px;line-height:18px;height:18px;color:#fff;white-space:nowrap;">设置</div>
<div class="abs" style="left:284.167px;top:1241.667px;width:2812.333px;height:47.167px;background:#f6f7fb;border-bottom:1px solid #eff1f5"></div>
<div class="abs" style="left:291.25px;top:1255.0px;font-size:14px;line-height:20px;height:20px;color:#333;white-space:nowrap;">序号</div>
<div class="abs" style="left:361.667px;top:1255.0px;font-size:14px;line-height:20px;height:20px;color:#333;white-space:nowrap;">问题特征</div>
<div class="abs" style="left:353.083px;top:1253.333px;width:0.917px;height:21.667px;background:#e6e9ee"></div>
<div class="abs" style="left:961.25px;top:1255.0px;font-size:14px;line-height:20px;height:20px;color:#333;white-space:nowrap;">最近上报时间</div>
<div class="abs" style="left:952.667px;top:1253.333px;width:0.917px;height:21.667px;background:#e6e9ee"></div>
<svg class="abs" style="left:1106.42px;top:1258.0px" width="8" height="14" viewBox="0 0 8 14"><path d="M0.3 5.6L4 0.8L7.7 5.6z" fill="#bbbfc7"/><path d="M0.3 8.4L4 13.2L7.7 8.4z" fill="#bbbfc7"/></svg>
<div class="abs" style="left:1132.083px;top:1255.0px;font-size:14px;line-height:20px;height:20px;color:#333;white-space:nowrap;">发生次数(占比)</div>
<div class="abs" style="left:1123.5px;top:1253.333px;width:0.917px;height:21.667px;background:#e6e9ee"></div>
<svg class="abs" style="left:1276.42px;top:1258.0px" width="8" height="14" viewBox="0 0 8 14"><path d="M0.3 5.6L4 0.8L7.7 5.6z" fill="#bbbfc7"/><path d="M0.3 8.4L4 13.2L7.7 8.4z" fill="#bbbfc7"/></svg>
<div class="abs" style="left:1302.083px;top:1255.0px;font-size:14px;line-height:20px;height:20px;color:#333;white-space:nowrap;">影响设备数(占比)</div>
<div class="abs" style="left:1293.5px;top:1253.333px;width:0.917px;height:21.667px;background:#e6e9ee"></div>
<svg class="abs" style="left:1445.58px;top:1258.0px" width="8" height="14" viewBox="0 0 8 14"><path d="M0.3 5.6L4 0.8L7.7 5.6z" fill="#bbbfc7"/><path d="M0.3 8.4L4 13.2L7.7 8.4z" fill="#bbbfc7"/></svg>
<div class="abs" style="left:1471.25px;top:1255.0px;font-size:14px;line-height:20px;height:20px;color:#333;white-space:nowrap;">版本范围</div>
<div class="abs" style="left:1462.667px;top:1253.333px;width:0.917px;height:21.667px;background:#e6e9ee"></div>
<svg class="abs" style="left:1532.083px;top:1258.17px" width="15" height="15" viewBox="0 0 16 16"><circle cx="8" cy="8" r="7" fill="none" stroke="#222" stroke-width="1.3"/><path d="M8 7v5" stroke="#222" stroke-width="1.4"/><circle cx="8" cy="4.7" r=".9" fill="#222"/></svg>
<div class="abs" style="left:1652.0px;top:1255.0px;font-size:14px;line-height:20px;height:20px;color:#333;white-space:nowrap;">个例标签</div>
<div class="abs" style="left:1643.417px;top:1253.333px;width:0.917px;height:21.667px;background:#e6e9ee"></div>
<svg class="abs" style="left:1712.833px;top:1258.17px" width="15" height="15" viewBox="0 0 16 16"><circle cx="8" cy="8" r="7" fill="none" stroke="#222" stroke-width="1.3"/><path d="M8 7v5" stroke="#222" stroke-width="1.4"/><circle cx="8" cy="4.7" r=".9" fill="#222"/></svg>
<div class="abs" style="left:1811.917px;top:1255.0px;font-size:14px;line-height:20px;height:20px;color:#333;white-space:nowrap;">发生次数/影响设备数</div>
<div class="abs" style="left:1803.333px;top:1253.333px;width:0.917px;height:21.667px;background:#e6e9ee"></div>
<svg class="abs" style="left:1966.25px;top:1258.0px" width="8" height="14" viewBox="0 0 8 14"><path d="M0.3 5.6L4 0.8L7.7 5.6z" fill="#bbbfc7"/><path d="M0.3 8.4L4 13.2L7.7 8.4z" fill="#bbbfc7"/></svg>
<div class="abs" style="left:1991.917px;top:1255.0px;font-size:14px;line-height:20px;height:20px;color:#333;white-space:nowrap;">卡顿平均耗时</div>
<div class="abs" style="left:1983.333px;top:1253.333px;width:0.917px;height:21.667px;background:#e6e9ee"></div>
<svg class="abs" style="left:2116.83px;top:1258.0px" width="8" height="14" viewBox="0 0 8 14"><path d="M0.3 5.6L4 0.8L7.7 5.6z" fill="#bbbfc7"/><path d="M0.3 8.4L4 13.2L7.7 8.4z" fill="#bbbfc7"/></svg>
<div class="abs" style="left:2142.5px;top:1255.0px;font-size:14px;line-height:20px;height:20px;color:#333;white-space:nowrap;">卡顿耗时P10</div>
<div class="abs" style="left:2133.917px;top:1253.333px;width:0.917px;height:21.667px;background:#e6e9ee"></div>
<svg class="abs" style="left:2266.42px;top:1258.0px" width="8" height="14" viewBox="0 0 8 14"><path d="M0.3 5.6L4 0.8L7.7 5.6z" fill="#bbbfc7"/><path d="M0.3 8.4L4 13.2L7.7 8.4z" fill="#bbbfc7"/></svg>
<div class="abs" style="left:2292.083px;top:1255.0px;font-size:14px;line-height:20px;height:20px;color:#333;white-space:nowrap;">卡顿耗时P25</div>
<div class="abs" style="left:2283.5px;top:1253.333px;width:0.917px;height:21.667px;background:#e6e9ee"></div>
<svg class="abs" style="left:2416.0px;top:1258.0px" width="8" height="14" viewBox="0 0 8 14"><path d="M0.3 5.6L4 0.8L7.7 5.6z" fill="#bbbfc7"/><path d="M0.3 8.4L4 13.2L7.7 8.4z" fill="#bbbfc7"/></svg>
<div class="abs" style="left:2441.667px;top:1255.0px;font-size:14px;line-height:20px;height:20px;color:#333;white-space:nowrap;">卡顿耗时P50</div>
<div class="abs" style="left:2433.083px;top:1253.333px;width:0.917px;height:21.667px;background:#e6e9ee"></div>
<svg class="abs" style="left:2566.0px;top:1258.0px" width="8" height="14" viewBox="0 0 8 14"><path d="M0.3 5.6L4 0.8L7.7 5.6z" fill="#bbbfc7"/><path d="M0.3 8.4L4 13.2L7.7 8.4z" fill="#bbbfc7"/></svg>
<div class="abs" style="left:2591.667px;top:1255.0px;font-size:14px;line-height:20px;height:20px;color:#333;white-space:nowrap;">关键堆栈平均耗时</div>
<div class="abs" style="left:2583.083px;top:1253.333px;width:0.917px;height:21.667px;background:#e6e9ee"></div>
<svg class="abs" style="left:2746.67px;top:1258.0px" width="8" height="14" viewBox="0 0 8 14"><path d="M0.3 5.6L4 0.8L7.7 5.6z" fill="#bbbfc7"/><path d="M0.3 8.4L4 13.2L7.7 8.4z" fill="#bbbfc7"/></svg>
<div class="abs" style="left:2772.333px;top:1255.0px;font-size:14px;line-height:20px;height:20px;color:#333;white-space:nowrap;">关键堆栈</div>
<div class="abs" style="left:2763.75px;top:1253.333px;width:0.917px;height:21.667px;background:#e6e9ee"></div>
<div class="abs" style="left:284.167px;top:1446.75px;width:2812.333px;height:0.833px;background:#eceef3"></div>
<div class="abs" style="left:292.083px;top:1357.5px;font-size:14px;line-height:20px;height:20px;color:#222;white-space:nowrap;">1</div>
<div class="abs" style="left:361.667px;top:1311.83px;font-size:14px;line-height:20px;height:20px;color:#0052d9;white-space:nowrap;font-weight:bold;">BBDA814A921F94D598E73311E4C20516</div>
<div class="abs" style="left:361.667px;top:1341.67px;font-size:14px;line-height:20px;height:20px;color:#222;white-space:nowrap;">androidx.fragment.app.Fragment.performViewCreated(B)</div>
<div class="abs" style="left:361.667px;top:1363.67px;font-size:14px;line-height:20px;height:20px;color:#222;white-space:nowrap;">yuanbao_proguard.pu4.onViewCreated(B)</div>
<div class="abs" style="left:361.667px;top:1385.67px;font-size:14px;line-height:20px;height:20px;color:#222;white-space:nowrap;">yuanbao_proguard.nm1.onViewCreated(B)</div>
<div class="abs" style="left:361.25px;top:1415.0px;width:160.417px;height:19.0px;background:#e8ebf0;border-radius:2px"></div>
<div class="abs" style="left:369.167px;top:1415.58px;font-size:12px;line-height:18px;height:18px;color:#888;white-space:nowrap;">2.31.0.108(release_2.31.0)</div>
<div class="abs" style="left:961.667px;top:1346.67px;font-size:14px;line-height:20px;height:20px;color:#222;white-space:nowrap;">2025-07-22</div>
<div class="abs" style="left:961.667px;top:1368.33px;font-size:14px;line-height:20px;height:20px;color:#222;white-space:nowrap;">16:02:55</div>
<div class="abs" style="left:1132.083px;top:1357.5px;font-size:14px;line-height:20px;height:20px;color:#222;white-space:nowrap;">3,897（13.9367%）</div>
<div class="abs" style="left:1302.083px;top:1357.5px;font-size:14px;line-height:20px;height:20px;color:#222;white-space:nowrap;">3,647（17.9425%）</div>
<div class="abs" style="left:1811.917px;top:1357.5px;font-size:14px;line-height:20px;height:20px;color:#222;white-space:nowrap;">1.07</div>
<div class="abs" style="left:1991.917px;top:1357.5px;font-size:14px;line-height:20px;height:20px;color:#222;white-space:nowrap;">742.35 ms</div>
<div class="abs" style="left:2142.5px;top:1357.5px;font-size:14px;line-height:20px;height:20px;color:#222;white-space:nowrap;">369.85 ms</div>
<div class="abs" style="left:2292.083px;top:1357.5px;font-size:14px;line-height:20px;height:20px;color:#222;white-space:nowrap;">445.06 ms</div>
<div class="abs" style="left:2441.667px;top:1357.5px;font-size:14px;line-height:20px;height:20px;color:#222;white-space:nowrap;">614.50 ms</div>
<div class="abs" style="left:2591.667px;top:1357.5px;font-size:14px;line-height:20px;height:20px;color:#222;white-space:nowrap;">207.93 ms</div>
<div class="abs" style="left:2772.333px;top:1357.5px;font-size:14px;line-height:20px;height:20px;color:#222;white-space:nowrap;">104.00</div>
<div class="abs" style="left:1471.25px;top:1357.917px;width:159.583px;height:20.0px;background:#e8ebf0;border-radius:2px"></div>
<div class="abs" style="left:1479.583px;top:1359.58px;font-size:12px;line-height:18px;height:18px;color:#888;white-space:nowrap;">2.31.0.108(release_2.31.0)</div>
<div class="abs" style="left:284.167px;top:1605.083px;width:2812.333px;height:0.833px;background:#eceef3"></div>
<div class="abs" style="left:292.083px;top:1515.83px;font-size:14px;line-height:20px;height:20px;color:#222;white-space:nowrap;">2</div>
<div class="abs" style="left:361.667px;top:1470.17px;font-size:14px;line-height:20px;height:20px;color:#0052d9;white-space:nowrap;font-weight:bold;">BDE7E58FEE2DA61AEB1CD8FE49605AC6</div>
<div class="abs" style="left:361.667px;top:1500.0px;font-size:14px;line-height:20px;height:20px;color:#222;white-space:nowrap;">androidx.fragment.app.Fragment.performViewCreated(B)</div>
<div class="abs" style="left:361.667px;top:1522.0px;font-size:14px;line-height:20px;height:20px;color:#222;white-space:nowrap;">yuanbao_proguard.qq4.onViewCreated(B)</div>
<div class="abs" style="left:361.667px;top:1544.0px;font-size:14px;line-height:20px;height:20px;color:#222;white-space:nowrap;">yuanbao_proguard.VI1.onViewCreated(B)</div>
<div class="abs" style="left:361.25px;top:1573.333px;width:153.75px;height:19.0px;background:#e8ebf0;border-radius:2px"></div>
<div class="abs" style="left:369.167px;top:1573.92px;font-size:12px;line-height:18px;height:18px;color:#888;white-space:nowrap;">2.30.0.56(release_2.30.0)</div>
<div class="abs" style="left:961.667px;top:1505.0px;font-size:14px;line-height:20px;height:20px;color:#222;white-space:nowrap;">2025-07-22</div>
<div class="abs" style="left:961.667px;top:1526.67px;font-size:14px;line-height:20px;height:20px;color:#222;white-space:nowrap;">16:01:57</div>
<div class="abs" style="left:1132.083px;top:1515.83px;font-size:14px;line-height:20px;height:20px;color:#222;white-space:nowrap;">1,674（5.9866%）</div>
<div class="abs" style="left:1302.083px;top:1515.83px;font-size:14px;line-height:20px;height:20px;color:#222;white-space:nowrap;">1,588（7.8126%）</div>
<div class="abs" style="left:1811.917px;top:1515.83px;font-size:14px;line-height:20px;height:20px;color:#222;white-space:nowrap;">1.05</div>
<div class="abs" style="left:1991.917px;top:1515.83px;font-size:14px;line-height:20px;height:20px;color:#222;white-space:nowrap;">721.16 ms</div>
<div class="abs" style="left:2142.5px;top:1515.83px;font-size:14px;line-height:20px;height:20px;color:#222;white-space:nowrap;">348.01 ms</div>
<div class="abs" style="left:2292.083px;top:1515.83px;font-size:14px;line-height:20px;height:20px;color:#222;white-space:nowrap;">418.76 ms</div>
<div class="abs" style="left:2441.667px;top:1515.83px;font-size:14px;line-height:20px;height:20px;color:#222;white-space:nowrap;">566.84 ms</div>
<div class="abs" style="left:2591.667px;top:1515.83px;font-size:14px;line-height:20px;height:20px;color:#222;white-space:nowrap;">195.54 ms</div>
<div class="abs" style="left:2772.333px;top:1515.83px;font-size:14px;line-height:20px;height:20px;color:#222;white-space:nowrap;">104.00</div>
<div class="abs" style="left:1471.25px;top:1516.25px;width:152.917px;height:20.0px;background:#e8ebf0;border-radius:2px"></div>
<div class="abs" style="left:1479.583px;top:1517.92px;font-size:12px;line-height:18px;height:18px;color:#888;white-space:nowrap;">2.30.0.56(release_2.30.0)</div>
<div class="abs" style="left:2816.25px;top:1245.167px;width:250.417px;height:338.583px;background:#fff;box-shadow:0 2px 12px rgba(0,0,0,0.18);border-radius:2px"></div>
<div class="abs" style="left:3038.333px;top:1239.583px;width:10px;height:10px;background:#fff;transform:rotate(45deg);box-shadow:-1px -1px 2px rgba(0,0,0,0.08)"></div>
<div class="abs" style="left:2825.0px;top:1244.583px;width:233.333px;height:5.417px;background:#fff"></div>
<svg class="abs" style="left:2832.917px;top:1257.45px" width="15.6" height="15.6" viewBox="0 0 16 16"><rect x="0" y="0" width="16" height="16" rx="1.5" fill="#1787f5"/><path d="M3.4 8.2L6.8 11.6L12.8 4.8" fill="none" stroke="#fff" stroke-width="1.7"/></svg>
<div class="abs" style="left:2856.667px;top:1256.17px;font-size:14px;line-height:20px;height:20px;color:#333;white-space:nowrap;">列展示</div>
<div class="abs" style="left:3023.333px;top:1255.83px;font-size:14px;line-height:20px;height:20px;color:#1787f5;white-space:nowrap;">重置</div>
<div class="abs" style="left:2816.25px;top:1285.833px;width:250.417px;height:1.0px;background:#e8ebf0"></div>
<svg class="abs" style="left:2864.667px;top:1299.53px" width="15.6" height="15.6" viewBox="0 0 16 16"><rect x="0" y="0" width="16" height="16" rx="1.5" fill="#1787f5"/><path d="M3.4 8.2L6.8 11.6L12.8 4.8" fill="none" stroke="#fff" stroke-width="1.7"/></svg>
<div class="abs" style="left:2888.167px;top:1297.0px;font-size:14px;line-height:20px;height:20px;color:#333;white-space:nowrap;">最近上报时间</div>
<div class="abs" style="left:2825.0px;top:1300.417px;width:1.4px;height:1.4px;background:#cfd3da"></div>
<div class="abs" style="left:2825.0px;top:1304.583px;width:1.4px;height:1.4px;background:#cfd3da"></div>
<div class="abs" style="left:2825.0px;top:1308.75px;width:1.4px;height:1.4px;background:#cfd3da"></div>
<div class="abs" style="left:2830.0px;top:1300.417px;width:1.4px;height:1.4px;background:#cfd3da"></div>
<div class="abs" style="left:2830.0px;top:1304.583px;width:1.4px;height:1.4px;background:#cfd3da"></div>
<div class="abs" style="left:2830.0px;top:1308.75px;width:1.4px;height:1.4px;background:#cfd3da"></div>
<svg class="abs" style="left:2864.667px;top:1327.45px" width="15.6" height="15.6" viewBox="0 0 16 16"><rect x="0" y="0" width="16" height="16" rx="1.5" fill="#1787f5"/><path d="M3.4 8.2L6.8 11.6L12.8 4.8" fill="none" stroke="#fff" stroke-width="1.7"/></svg>
<div class="abs" style="left:2888.167px;top:1324.92px;font-size:14px;line-height:20px;height:20px;color:#333;white-space:nowrap;">发生次数(占比)</div>
<div class="abs" style="left:2825.0px;top:1328.333px;width:1.4px;height:1.4px;background:#cfd3da"></div>
<div class="abs" style="left:2825.0px;top:1332.5px;width:1.4px;height:1.4px;background:#cfd3da"></div>
<div class="abs" style="left:2825.0px;top:1336.667px;width:1.4px;height:1.4px;background:#cfd3da"></div>
<div class="abs" style="left:2830.0px;top:1328.333px;width:1.4px;height:1.4px;background:#cfd3da"></div>
<div class="abs" style="left:2830.0px;top:1332.5px;width:1.4px;height:1.4px;background:#cfd3da"></div>
<div class="abs" style="left:2830.0px;top:1336.667px;width:1.4px;height:1.4px;background:#cfd3da"></div>
<svg class="abs" style="left:2864.667px;top:1355.37px" width="15.6" height="15.6" viewBox="0 0 16 16"><rect x="0" y="0" width="16" height="16" rx="1.5" fill="#1787f5"/><path d="M3.4 8.2L6.8 11.6L12.8 4.8" fill="none" stroke="#fff" stroke-width="1.7"/></svg>
<div class="abs" style="left:2888.167px;top:1352.83px;font-size:14px;line-height:20px;height:20px;color:#333;white-space:nowrap;">影响设备数(占比)</div>
<div class="abs" style="left:2825.0px;top:1356.25px;width:1.4px;height:1.4px;background:#cfd3da"></div>
<div class="abs" style="left:2825.0px;top:1360.417px;width:1.4px;height:1.4px;background:#cfd3da"></div>
<div class="abs" style="left:2825.0px;top:1364.583px;width:1.4px;height:1.4px;background:#cfd3da"></div>
<div class="abs" style="left:2830.0px;top:1356.25px;width:1.4px;height:1.4px;background:#cfd3da"></div>
<div class="abs" style="left:2830.0px;top:1360.417px;width:1.4px;height:1.4px;background:#cfd3da"></div>
<div class="abs" style="left:2830.0px;top:1364.583px;width:1.4px;height:1.4px;background:#cfd3da"></div>
<svg class="abs" style="left:2864.667px;top:1383.7px" width="15.6" height="15.6" viewBox="0 0 16 16"><rect x="0" y="0" width="16" height="16" rx="1.5" fill="#1787f5"/><path d="M3.4 8.2L6.8 11.6L12.8 4.8" fill="none" stroke="#fff" stroke-width="1.7"/></svg>
<div class="abs" style="left:2888.167px;top:1381.17px;font-size:14px;line-height:20px;height:20px;color:#333;white-space:nowrap;">版本范围</div>
<svg class="abs" style="left:2949.583px;top:1384.58px" width="15" height="15" viewBox="0 0 16 16"><circle cx="8" cy="8" r="7" fill="none" stroke="#222" stroke-width="1.3"/><path d="M8 7v5" stroke="#222" stroke-width="1.4"/><circle cx="8" cy="4.7" r=".9" fill="#222"/></svg>
<div class="abs" style="left:2825.0px;top:1384.583px;width:1.4px;height:1.4px;background:#cfd3da"></div>
<div class="abs" style="left:2825.0px;top:1388.75px;width:1.4px;height:1.4px;background:#cfd3da"></div>
<div class="abs" style="left:2825.0px;top:1392.917px;width:1.4px;height:1.4px;background:#cfd3da"></div>
<div class="abs" style="left:2830.0px;top:1384.583px;width:1.4px;height:1.4px;background:#cfd3da"></div>
<div class="abs" style="left:2830.0px;top:1388.75px;width:1.4px;height:1.4px;background:#cfd3da"></div>
<div class="abs" style="left:2830.0px;top:1392.917px;width:1.4px;height:1.4px;background:#cfd3da"></div>
<svg class="abs" style="left:2864.667px;top:1411.2px" width="15.6" height="15.6" viewBox="0 0 16 16"><rect x="0" y="0" width="16" height="16" rx="1.5" fill="#1787f5"/><path d="M3.4 8.2L6.8 11.6L12.8 4.8" fill="none" stroke="#fff" stroke-width="1.7"/></svg>
<div class="abs" style="left:2888.167px;top:1408.67px;font-size:14px;line-height:20px;height:20px;color:#333;white-space:nowrap;">个例标签</div>
<svg class="abs" style="left:2949.583px;top:1412.08px" width="15" height="15" viewBox="0 0 16 16"><circle cx="8" cy="8" r="7" fill="none" stroke="#222" stroke-width="1.3"/><path d="M8 7v5" stroke="#222" stroke-width="1.4"/><circle cx="8" cy="4.7" r=".9" fill="#222"/></svg>
<div class="abs" style="left:2825.0px;top:1412.083px;width:1.4px;height:1.4px;background:#cfd3da"></div>
<div class="abs" style="left:2825.0px;top:1416.25px;width:1.4px;height:1.4px;background:#cfd3da"></div>
<div class="abs" style="left:2825.0px;top:1420.417px;width:1.4px;height:1.4px;background:#cfd3da"></div>
<div class="abs" style="left:2830.0px;top:1412.083px;width:1.4px;height:1.4px;background:#cfd3da"></div>
<div class="abs" style="left:2830.0px;top:1416.25px;width:1.4px;height:1.4px;background:#cfd3da"></div>
<div class="abs" style="left:2830.0px;top:1420.417px;width:1.4px;height:1.4px;background:#cfd3da"></div>
<svg class="abs" style="left:2864.667px;top:1439.12px" width="15.6" height="15.6" viewBox="0 0 16 16"><rect x="0" y="0" width="16" height="16" rx="1.5" fill="#1787f5"/><path d="M3.4 8.2L6.8 11.6L12.8 4.8" fill="none" stroke="#fff" stroke-width="1.7"/></svg>
<div class="abs" style="left:2888.167px;top:1436.58px;font-size:14px;line-height:20px;height:20px;color:#333;white-space:nowrap;">发生次数/影响设备数</div>
<div class="abs" style="left:2825.0px;top:1440.0px;width:1.4px;height:1.4px;background:#cfd3da"></div>
<div class="abs" style="left:2825.0px;top:1444.167px;width:1.4px;height:1.4px;background:#cfd3da"></div>
<div class="abs" style="left:2825.0px;top:1448.333px;width:1.4px;height:1.4px;background:#cfd3da"></div>
<div class="abs" style="left:2830.0px;top:1440.0px;width:1.4px;height:1.4px;background:#cfd3da"></div>
<div class="abs" style="left:2830.0px;top:1444.167px;width:1.4px;height:1.4px;background:#cfd3da"></div>
<div class="abs" style="left:2830.0px;top:1448.333px;width:1.4px;height:1.4px;background:#cfd3da"></div>
<svg class="abs" style="left:2864.667px;top:1467.45px" width="15.6" height="15.6" viewBox="0 0 16 16"><rect x="0" y="0" width="16" height="16" rx="1.5" fill="#1787f5"/><path d="M3.4 8.2L6.8 11.6L12.8 4.8" fill="none" stroke="#fff" stroke-width="1.7"/></svg>
<div class="abs" style="left:2888.167px;top:1464.92px;font-size:14px;line-height:20px;height:20px;color:#333;white-space:nowrap;">卡顿平均耗时</div>
<div class="abs" style="left:2825.0px;top:1468.333px;width:1.4px;height:1.4px;background:#cfd3da"></div>
<div class="abs" style="left:2825.0px;top:1472.5px;width:1.4px;height:1.4px;background:#cfd3da"></div>
<div class="abs" style="left:2825.0px;top:1476.667px;width:1.4px;height:1.4px;background:#cfd3da"></div>
<div class="abs" style="left:2830.0px;top:1468.333px;width:1.4px;height:1.4px;background:#cfd3da"></div>
<div class="abs" style="left:2830.0px;top:1472.5px;width:1.4px;height:1.4px;background:#cfd3da"></div>
<div class="abs" style="left:2830.0px;top:1476.667px;width:1.4px;height:1.4px;background:#cfd3da"></div>
<svg class="abs" style="left:2864.667px;top:1495.37px" width="15.6" height="15.6" viewBox="0 0 16 16"><rect x="0" y="0" width="16" height="16" rx="1.5" fill="#1787f5"/><path d="M3.4 8.2L6.8 11.6L12.8 4.8" fill="none" stroke="#fff" stroke-width="1.7"/></svg>
<div class="abs" style="left:2888.167px;top:1492.83px;font-size:14px;line-height:20px;height:20px;color:#333;white-space:nowrap;">卡顿耗时P10</div>
<div class="abs" style="left:2825.0px;top:1496.25px;width:1.4px;height:1.4px;background:#cfd3da"></div>
<div class="abs" style="left:2825.0px;top:1500.417px;width:1.4px;height:1.4px;background:#cfd3da"></div>
<div class="abs" style="left:2825.0px;top:1504.583px;width:1.4px;height:1.4px;background:#cfd3da"></div>
<div class="abs" style="left:2830.0px;top:1496.25px;width:1.4px;height:1.4px;background:#cfd3da"></div>
<div class="abs" style="left:2830.0px;top:1500.417px;width:1.4px;height:1.4px;background:#cfd3da"></div>
<div class="abs" style="left:2830.0px;top:1504.583px;width:1.4px;height:1.4px;background:#cfd3da"></div>
<svg class="abs" style="left:2864.667px;top:1523.28px" width="15.6" height="15.6" viewBox="0 0 16 16"><rect x="0" y="0" width="16" height="16" rx="1.5" fill="#1787f5"/><path d="M3.4 8.2L6.8 11.6L12.8 4.8" fill="none" stroke="#fff" stroke-width="1.7"/></svg>
<div class="abs" style="left:2888.167px;top:1520.75px;font-size:14px;line-height:20px;height:20px;color:#333;white-space:nowrap;">卡顿耗时P25</div>
<div class="abs" style="left:2825.0px;top:1524.167px;width:1.4px;height:1.4px;background:#cfd3da"></div>
<div class="abs" style="left:2825.0px;top:1528.333px;width:1.4px;height:1.4px;background:#cfd3da"></div>
<div class="abs" style="left:2825.0px;top:1532.5px;width:1.4px;height:1.4px;background:#cfd3da"></div>
<div class="abs" style="left:2830.0px;top:1524.167px;width:1.4px;height:1.4px;background:#cfd3da"></div>
<div class="abs" style="left:2830.0px;top:1528.333px;width:1.4px;height:1.4px;background:#cfd3da"></div>
<div class="abs" style="left:2830.0px;top:1532.5px;width:1.4px;height:1.4px;background:#cfd3da"></div>
<svg class="abs" style="left:2864.667px;top:1551.2px" width="15.6" height="15.6" viewBox="0 0 16 16"><rect x="0" y="0" width="16" height="16" rx="1.5" fill="#1787f5"/><path d="M3.4 8.2L6.8 11.6L12.8 4.8" fill="none" stroke="#fff" stroke-width="1.7"/></svg>
<div class="abs" style="left:2888.167px;top:1548.67px;font-size:14px;line-height:20px;height:20px;color:#333;white-space:nowrap;">卡顿耗时P50</div>
<div class="abs" style="left:2825.0px;top:1552.083px;width:1.4px;height:1.4px;background:#cfd3da"></div>
<div class="abs" style="left:2825.0px;top:1556.25px;width:1.4px;height:1.4px;background:#cfd3da"></div>
<div class="abs" style="left:2825.0px;top:1560.417px;width:1.4px;height:1.4px;background:#cfd3da"></div>
<div class="abs" style="left:2830.0px;top:1552.083px;width:1.4px;height:1.4px;background:#cfd3da"></div>
<div class="abs" style="left:2830.0px;top:1556.25px;width:1.4px;height:1.4px;background:#cfd3da"></div>
<div class="abs" style="left:2830.0px;top:1560.417px;width:1.4px;height:1.4px;background:#cfd3da"></div>
<div class="abs" style="left:3150.833px;top:1271.667px;width:44.167px;height:61.667px;background:#0052d9;border-radius:22.083px"></div>
<svg class="abs" style="left:3163.333px;top:1282.5px" width="17.5" height="17.5" viewBox="0 0 20 20"><path d="M3.6 11V9a6.4 6.4 0 0 1 12.8 0v2" fill="none" stroke="#fff" stroke-width="1.7"/><rect x="1.8" y="8.6" width="3" height="5" rx="1" fill="#fff"/><rect x="15.2" y="8.6" width="3" height="5" rx="1" fill="#fff"/><path d="M16.4 13.5c0 2.4-2 3.6-5.4 3.6" fill="none" stroke="#fff" stroke-width="1.5"/><path d="M7.6 10.2c1.4 1.4 3.4 1.4 4.8 0" fill="none" stroke="#fff" stroke-width="1.4"/></svg>
<div class="abs" style="left:3160.667px;top:1303.5px;font-size:12px;line-height:18px;height:18px;color:#fff;white-space:nowrap;">咨询</div>
<div class="abs" style="left:3150.833px;top:1345.417px;width:44.167px;height:116.25px;background:#fff;border-radius:22.083px;box-shadow:0 2px 10px rgba(0,0,0,0.10)"></div>
<svg class="abs" style="left:3163.333px;top:1358.333px" width="17.5" height="14.167" viewBox="0 0 20 16"><path d="M5 14.5h9.6a3.6 3.6 0 0 0 2.3-6.3M12 3.3a5 5 0 0 0-7.4 3.5a3.9 3.9 0 0 0 .4 7.7" fill="none" stroke="#111" stroke-width="1.8"/><circle cx="15.4" cy="3.6" r="2.6" fill="#111"/></svg>
<div class="abs" style="left:3160.833px;top:1377.67px;font-size:12px;line-height:18px;height:18px;color:#999;white-space:nowrap;">动态</div>
<div class="abs" style="left:3164.167px;top:1402.917px;width:15.833px;height:0.833px;background:#e8e8e8"></div>
<svg class="abs" style="left:3163.333px;top:1412.5px" width="17.5" height="14.167" viewBox="0 0 20 16"><path d="M10 3.2C8 1.6 4.6 1.4 1.4 2.2v10.6c3.2-.8 6.6-.6 8.600 1M10 3.200c2-1.600 5.400-1.800 8.600-1v10.600c-3.200-.8-6.600-.6-8.600 1z" fill="none" stroke="#111" stroke-width="1.8" stroke-linejoin="round"/><path d="M4.400 7.4h3M12.600 7.400h3" stroke="#111" stroke-width="1.600"/></svg>
<div class="abs" style="left:3160.833px;top:1431.83px;font-size:12px;line-height:18px;height:18px;color:#999;white-space:nowrap;">文档</div>
<div class="abs" style="left:3154.583px;top:1473.75px;width:36.25px;height:36.25px;border-radius:50%;background:#fff;box-shadow:0 2px 10px rgba(0,0,0,0.10)"></div>
<svg class="abs" style="left:3169.55px;top:1487.083px" width="7" height="10" viewBox="0 0 7 10"><path d="M1.200 1L5.600 5L1.200 9" fill="none" stroke="#222" stroke-width="1.500"/></svg>
</div></body></html>
